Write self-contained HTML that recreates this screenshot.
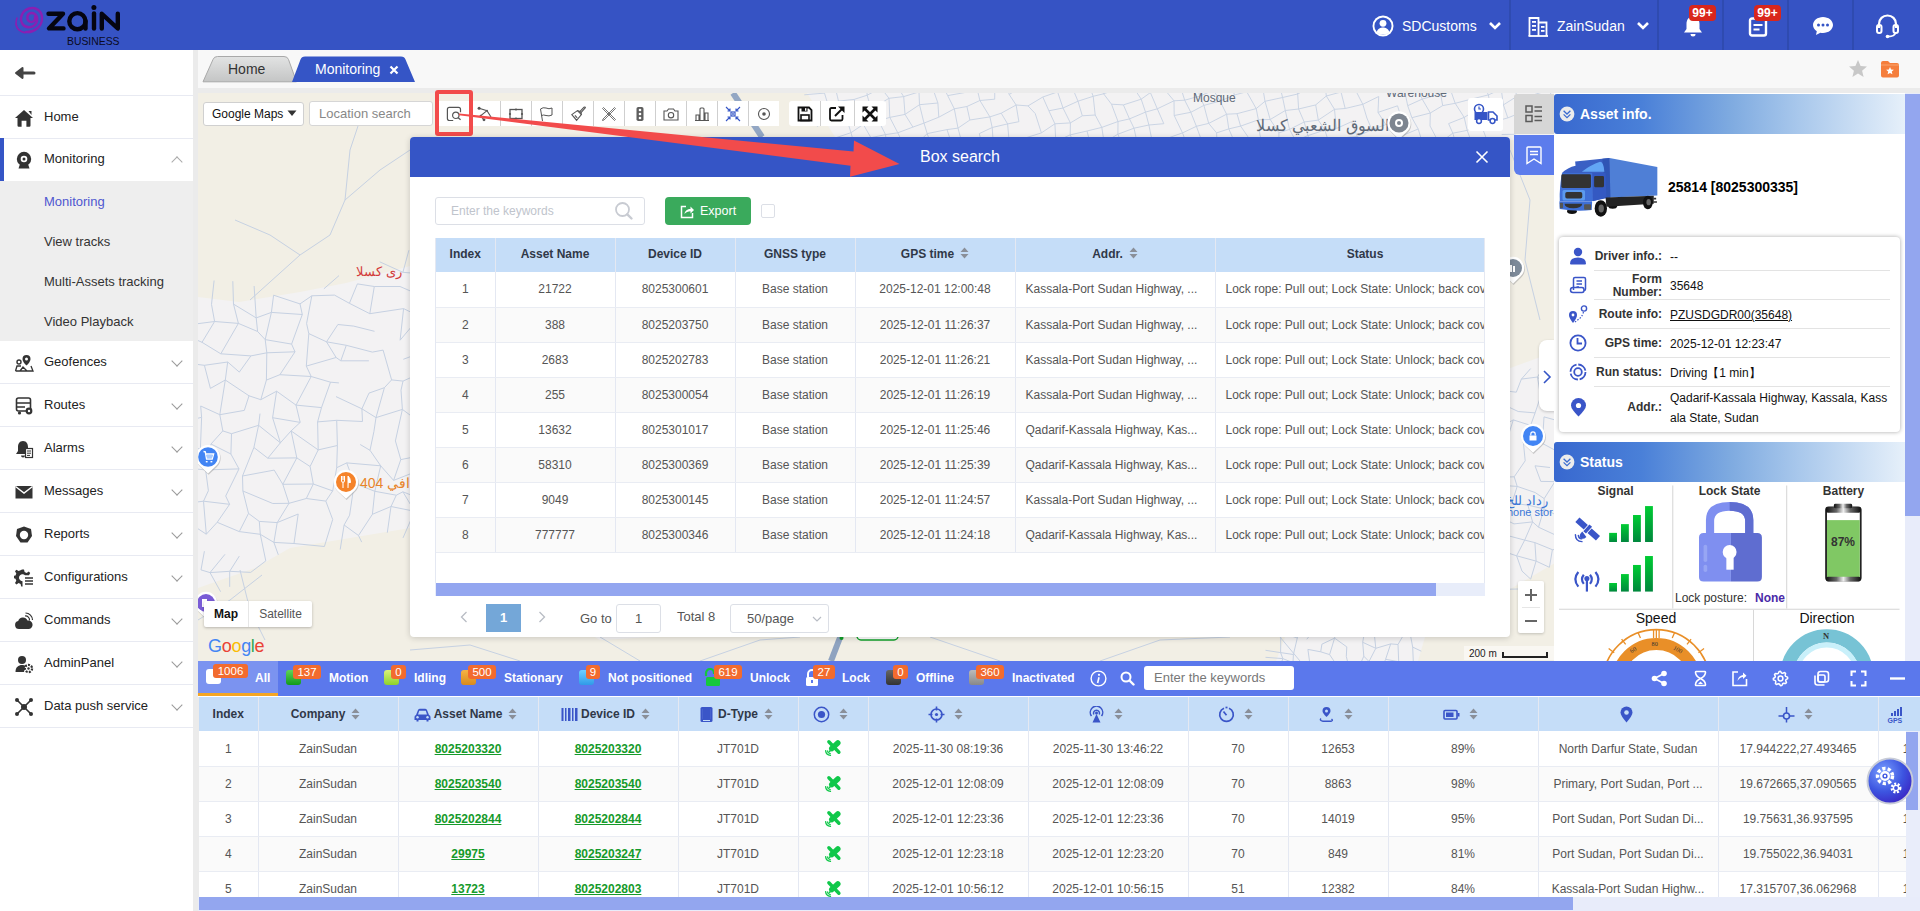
<!DOCTYPE html>
<html><head><meta charset="utf-8">
<style>
*{box-sizing:border-box}
html,body{margin:0;padding:0}
body{width:1920px;height:911px;overflow:hidden;position:relative;font-family:"Liberation Sans",sans-serif;background:#ebebeb;color:#333}
.abs{position:absolute}
#hdr{left:0;top:0;width:1920px;height:50px;background:#3653c4}
#side{left:0;top:50px;width:193px;height:861px;background:#fff}
.mi{position:absolute;left:0;width:193px;height:43px;border-bottom:1px solid #e8eaf2;font-size:13px;color:#222}
.mi .t{position:absolute;left:44px;top:13px}
.mi svg.ic{position:absolute;left:14px;top:12px}
.mi .chev{position:absolute;left:173px;top:16px;width:8px;height:8px;border-right:1px solid #999;border-bottom:1px solid #999;transform:rotate(45deg)}
.sub{position:absolute;left:44px;font-size:13px;color:#333}
#tabbar{left:198px;top:50px;width:1722px;height:38px;background:#f8f8f8}
#map{left:198px;top:93px;width:1722px;height:568px;background:#f2efe6;overflow:hidden}
</style></head><body>
<div id="hdr" class="abs">
<svg class="abs" style="left:0;top:0" width="130" height="50" viewBox="0 0 130 50">
 <g fill="none" stroke="#8a1fb2" stroke-linecap="round">
  <path d="M35 17 C36 21 32 23 29.5 21.5 C26 19.5 27 13.5 31 13 C36 12.5 38.5 18 36.5 22.5 C34 28 26 29 22.5 24 C19.5 19.5 21 11 29 8.5 C36 6.5 42.5 11 42 19 C41.5 27 34 32.5 26 32" stroke-width="2.4"/>
  <path d="M17 18 C14.5 25 17 30.5 24 32.5" stroke-width="1.6"/>
  <path d="M16 24 C16.5 29 20 31.5 25 32.8" stroke-width="1.4"/>
 </g>
 <g fill="none" stroke="#050510" stroke-width="4.4" stroke-linecap="round" stroke-linejoin="round">
  <path d="M48.5 13.8 H63 L49 28.4 H63.5"/>
  <circle cx="77.4" cy="21.2" r="8.1"/><path d="M85.5 21 V28.5"/>
  <path d="M94 13.5 V28.5"/>
  <path d="M101.8 28.5 V13.8 L117.8 28.5 V13.8"/>
 </g>
 <circle cx="93.9" cy="7.6" r="2.5" fill="#050510"/>
 <text x="67" y="44.6" font-family="Liberation Sans" font-size="11.2" fill="#0a0a22" textLength="52.5" lengthAdjust="spacingAndGlyphs">BUSINESS</text>
</svg>
<!-- user -->
<svg class="abs" style="left:1371px;top:14px" width="24" height="24" viewBox="0 0 24 24"><circle cx="12" cy="12" r="10.5" fill="#fff"/><circle cx="12" cy="12" r="8.6" fill="#3555c6"/><circle cx="12" cy="9.3" r="3.4" fill="#fff"/><path d="M5.6 18.2 C7 14.6 9.4 13.6 12 13.6 C14.6 13.6 17 14.6 18.4 18.2 C16.8 19.8 14.6 20.6 12 20.6 C9.4 20.6 7.2 19.8 5.6 18.2Z" fill="#fff"/></svg>
<div class="abs" style="left:1402px;top:18px;font-size:14px;color:#fff">SDCustoms</div>
<svg class="abs" style="left:1488px;top:20px" width="14" height="12" viewBox="0 0 14 12"><path d="M2 3 L7 8 L12 3" fill="none" stroke="#fff" stroke-width="2.6"/></svg>
<div class="abs" style="left:1509px;top:0;width:2px;height:50px;background:#2f4bb0"></div>
<svg class="abs" style="left:1528px;top:16px" width="21" height="21" viewBox="0 0 21 21"><g fill="none" stroke="#fff" stroke-width="1.8"><path d="M1.5 20 V2 H10.5 V20"/><path d="M10.5 6.5 H18.5 V20"/><path d="M0.5 20 H20"/></g><g fill="#fff"><rect x="4" y="5" width="4" height="1.8"/><rect x="4" y="9" width="4" height="1.8"/><rect x="4" y="13" width="4" height="1.8"/><rect x="13" y="10" width="3.5" height="1.8"/><rect x="13" y="14" width="3.5" height="1.8"/></g></svg>
<div class="abs" style="left:1557px;top:18px;font-size:14px;color:#fff">ZainSudan</div>
<svg class="abs" style="left:1636px;top:20px" width="14" height="12" viewBox="0 0 14 12"><path d="M2 3 L7 8 L12 3" fill="none" stroke="#fff" stroke-width="2.6"/></svg>
<div class="abs" style="left:1657px;top:0;width:2px;height:50px;background:#2f4bb0"></div>
<svg class="abs" style="left:1681px;top:14px" width="24" height="24" viewBox="0 0 24 24"><path d="M12 2.5 C7.5 2.5 5.5 6 5.5 10 V15 L3 18.5 H21 L18.5 15 V10 C18.5 6 16.5 2.5 12 2.5Z" fill="#fff"/><path d="M9.5 20 A2.5 2.5 0 0 0 14.5 20Z" fill="#fff"/></svg>
<div class="abs" style="left:1689px;top:5px;width:27px;height:16px;background:#d9261c;border-radius:4px;color:#fff;font-size:12px;font-weight:bold;text-align:center;line-height:16px">99+</div>
<div class="abs" style="left:1722px;top:0;width:2px;height:50px;background:#2f4bb0"></div>
<svg class="abs" style="left:1746px;top:14px" width="24" height="24" viewBox="0 0 24 24"><rect x="4" y="4.5" width="16" height="17" rx="2" fill="none" stroke="#fff" stroke-width="2.4"/><rect x="8" y="2" width="8" height="4" rx="1" fill="#fff"/><rect x="7.5" y="10" width="9" height="2" fill="#fff"/><rect x="7.5" y="14.5" width="6" height="2" fill="#fff"/></svg>
<div class="abs" style="left:1754px;top:5px;width:27px;height:16px;background:#d9261c;border-radius:4px;color:#fff;font-size:12px;font-weight:bold;text-align:center;line-height:16px">99+</div>
<div class="abs" style="left:1787px;top:0;width:2px;height:50px;background:#2f4bb0"></div>
<svg class="abs" style="left:1811px;top:14px" width="24" height="24" viewBox="0 0 24 24"><path d="M12 3 C6.5 3 2 6.6 2 11 C2 13.6 3.5 15.8 5.8 17.3 L5 21 L9.4 18.7 C10.2 18.9 11.1 19 12 19 C17.5 19 22 15.4 22 11 C22 6.6 17.5 3 12 3Z" fill="#fff"/><circle cx="7.5" cy="11" r="1.5" fill="#3555c6"/><circle cx="12" cy="11" r="1.5" fill="#3555c6"/><circle cx="16.5" cy="11" r="1.5" fill="#3555c6"/></svg>
<div class="abs" style="left:1852px;top:0;width:2px;height:50px;background:#2f4bb0"></div>
<svg class="abs" style="left:1875px;top:13px" width="25" height="26" viewBox="0 0 25 26"><path d="M4 15 V11 C4 6 7.8 2.5 12.5 2.5 C17.2 2.5 21 6 21 11 V15" fill="none" stroke="#fff" stroke-width="2.2"/><rect x="2" y="12" width="4.5" height="8" rx="2" fill="none" stroke="#fff" stroke-width="2"/><rect x="18.5" y="12" width="4.5" height="8" rx="2" fill="none" stroke="#fff" stroke-width="2"/><path d="M20.5 20 C19.5 23 16.5 23.5 13.5 23.5" fill="none" stroke="#fff" stroke-width="1.8"/><circle cx="12.5" cy="23.5" r="1.8" fill="#fff"/></svg>
</div>
<div id="side" class="abs"><svg class="abs" style="left:14px;top:16px" width="22" height="14" viewBox="0 0 22 14"><path d="M8.5 2 L2 7 L8.5 12 Z" fill="#444" stroke="#444" stroke-width="2" stroke-linejoin="round"/><path d="M4 7 H20" stroke="#444" stroke-width="3" stroke-linecap="round"/></svg><div class="abs" style="left:0;top:45px;width:193px;height:1px;background:#e8eaf2"></div><div class="mi" style="top:46px"><svg class="ic" width="20" height="20" viewBox="0 0 20 20"><path d="M10 2 L1 10 H3.5 V17.5 A1.2 1.2 0 0 0 4.7 18.7 H7.6 V12.8 H12.4 V18.7 H15.3 A1.2 1.2 0 0 0 16.5 17.5 V10 H19 Z" fill="#333"/><path d="M14.5 3 H17.5 V7 Z" fill="#333"/></svg><span class="t">Home</span></div><div class="mi" style="top:88px;height:43px;border-bottom:none"><svg class="ic" width="20" height="20" viewBox="0 0 20 20"><path d="M6 14 L4.5 18.5 H15.5 L14 14Z" fill="#333"/><circle cx="10" cy="9" r="7.2" fill="#333"/><circle cx="10" cy="9" r="3.3" fill="#fff"/><circle cx="10" cy="9" r="1.5" fill="#333"/></svg><span class="t">Monitoring</span><div class="chev" style="transform:rotate(-135deg);top:20px;border-color:#aaa"></div><div class="abs" style="left:0;top:0;width:4px;height:43px;background:#3555c6"></div></div><div class="abs" style="left:0;top:131px;width:193px;height:160px;background:#eeeeee"></div><div class="sub" style="top:144px;color:#4f57d0">Monitoring</div><div class="sub" style="top:184px">View tracks</div><div class="sub" style="top:224px">Multi-Assets tracking</div><div class="sub" style="top:264px">Video Playback</div><div class="mi" style="top:291px"><svg class="ic" width="20" height="20" viewBox="0 0 20 20"><path d="M12.5 2 A4 4 0 0 0 8.5 6 C8.5 9 12.5 12.5 12.5 12.5 C12.5 12.5 16.5 9 16.5 6 A4 4 0 0 0 12.5 2Z M12.5 4.5 A1.5 1.5 0 1 1 12.5 7.5 A1.5 1.5 0 1 1 12.5 4.5Z" fill="#333"/><circle cx="5" cy="9" r="2" fill="none" stroke="#333" stroke-width="1.4"/><path d="M1.5 18 L3 13 H7 M17 13 L19 18 H1.5 M6 18 L9 14 L13 18" fill="none" stroke="#333" stroke-width="1.3"/></svg><span class="t">Geofences</span><div class="chev"></div></div><div class="mi" style="top:334px"><svg class="ic" width="20" height="20" viewBox="0 0 20 20"><rect x="2.5" y="2" width="14" height="13" rx="2" fill="none" stroke="#333" stroke-width="1.6"/><path d="M2.5 7 H16.5 M2.5 11 H11" stroke="#333" stroke-width="1.4"/><circle cx="5.5" cy="17" r="1.6" fill="#333"/><circle cx="15" cy="15" r="3.4" fill="#333"/><circle cx="15" cy="15" r="1.2" fill="#fff"/></svg><span class="t">Routes</span><div class="chev"></div></div><div class="mi" style="top:377px"><svg class="ic" width="20" height="20" viewBox="0 0 20 20"><path d="M9 2 C5.5 2 4 5 4 8 V12 L2 15 H11 V9 H14 V8 C14 5 12.5 2 9 2Z" fill="#333"/><rect x="11.5" y="9.5" width="7" height="9" fill="#fff" stroke="#333" stroke-width="1.2"/><path d="M13 12 H17 M13 14.2 H17 M13 16.4 H16" stroke="#333" stroke-width="1"/><path d="M7 16.5 A2 2 0 0 0 11 16.5Z" fill="#333"/></svg><span class="t">Alarms</span><div class="chev"></div></div><div class="mi" style="top:420px"><svg class="ic" width="20" height="20" viewBox="0 0 20 20"><path d="M1.5 4 H18.5 V16.5 H1.5Z" fill="#333"/><path d="M1.5 4.5 L10 11 L18.5 4.5" fill="none" stroke="#fff" stroke-width="1.4"/></svg><span class="t">Messages</span><div class="chev"></div></div><div class="mi" style="top:463px"><svg class="ic" width="20" height="20" viewBox="0 0 20 20"><path d="M10 1.5 L17 4 L18 11 L13.5 17.5 H6.5 L2 11 L3 4Z" fill="#333"/><circle cx="10" cy="10" r="4.2" fill="#fff"/></svg><span class="t">Reports</span><div class="chev"></div></div><div class="mi" style="top:506px"><svg class="ic" width="20" height="20" viewBox="0 0 20 20"><path d="M8 1.5 L10 1.5 L10.6 4 L12.6 4.9 L14.8 3.6 L16.2 5 L15 7.2 H11 A3.5 3.5 0 1 0 8.5 13.2 V16 L8.6 18.5 H7.2 L6.6 16 L4.6 15.1 L2.4 16.4 L1 15 L2.3 12.8 L1.5 10.8 L-0.5 10 V8 L1.5 7.4 L2.3 5.4 L1 3.2 L2.4 1.8 L4.6 3.1 L6.6 2.2Z" fill="#333"/><path d="M11 10 H19 M11 13 H19 M11 16 H19" stroke="#333" stroke-width="1.6"/></svg><span class="t">Configurations</span><div class="chev"></div></div><div class="mi" style="top:549px"><svg class="ic" width="20" height="20" viewBox="0 0 20 20"><path d="M5 18 A4 4 0 0 1 4.2 10.1 A5 5 0 0 1 13.5 9.5 A3.3 3.3 0 0 1 15 18Z" fill="#333"/><path d="M11 5 A4 4 0 0 1 15.5 9.5 M11.5 2 A7 7 0 0 1 18.5 9" fill="none" stroke="#333" stroke-width="1.2"/></svg><span class="t">Commands</span><div class="chev"></div></div><div class="mi" style="top:592px"><svg class="ic" width="20" height="20" viewBox="0 0 20 20"><circle cx="8" cy="6" r="4" fill="#333"/><path d="M1.5 18 C1.5 13 4.5 11 8 11 C9.5 11 10.5 11.3 11.2 11.8 L10 18Z" fill="#333"/><circle cx="14.5" cy="14.5" r="3.6" fill="none" stroke="#333" stroke-width="2.2" stroke-dasharray="2 1.2"/><circle cx="14.5" cy="14.5" r="1.2" fill="#333"/></svg><span class="t">AdminPanel</span><div class="chev"></div></div><div class="mi" style="top:635px"><svg class="ic" width="20" height="20" viewBox="0 0 20 20"><path d="M3 3 L17 17 M17 3 L3 17" stroke="#333" stroke-width="1.6"/><circle cx="10" cy="10" r="3" fill="#333"/><circle cx="3" cy="3" r="2" fill="#333"/><circle cx="17" cy="3" r="2" fill="#333"/><circle cx="3" cy="17" r="2" fill="#333"/><circle cx="17" cy="17" r="2" fill="#333"/></svg><span class="t">Data push service</span><div class="chev"></div></div></div>
<div id="tabbar" class="abs">
<svg class="abs" style="left:0;top:0" width="230" height="38" viewBox="0 0 230 38">
 <defs><linearGradient id="tg" x1="0" y1="0" x2="0" y2="1"><stop offset="0" stop-color="#e2e3e3"/><stop offset="1" stop-color="#c4c5c5"/></linearGradient></defs>
 <path d="M5 31.8 L15 9.5 Q16 6.5 19.5 6.5 H86 Q89.5 6.5 90.5 9.5 L98.5 31.8 Z" fill="url(#tg)" stroke="#a9a9a9" stroke-width="1"/>
 <path d="M94 32 L102.5 9.5 Q103.5 6.5 107 6.5 H203 Q206.5 6.5 207.5 9.5 L217 32 Z" fill="#3555c6"/>
</svg>
<div class="abs" style="left:30px;top:11px;font-size:14px;color:#333">Home</div>
<div class="abs" style="left:117px;top:11px;font-size:14px;color:#fff">Monitoring</div>
<svg class="abs" style="left:191px;top:15px" width="10" height="10" viewBox="0 0 10 10"><path d="M1.5 1.5 L8.5 8.5 M8.5 1.5 L1.5 8.5" stroke="#fff" stroke-width="2.2"/></svg>
<svg class="abs" style="left:1650px;top:9px" width="20" height="20" viewBox="0 0 20 20"><path d="M10 1 L12.6 7 L19 7.5 L14.1 11.7 L15.6 18 L10 14.6 L4.4 18 L5.9 11.7 L1 7.5 L7.4 7 Z" fill="#c8c8c8"/></svg>
<svg class="abs" style="left:1682px;top:9px" width="20" height="20" viewBox="0 0 20 20"><path d="M1 4 Q1 2 3 2 H8 L10 4 H17 Q19 4 19 6 V16.5 Q19 18.5 17 18.5 H3 Q1 18.5 1 16.5Z" fill="#f57e3c"/><path d="M1 6 H19" stroke="#f9a46f" stroke-width="1"/><path d="M10 8 L11.1 10.6 L13.9 10.8 L11.8 12.6 L12.4 15.3 L10 13.9 L7.6 15.3 L8.2 12.6 L6.1 10.8 L8.9 10.6Z" fill="#fff"/></svg>
</div>
<div id="map" class="abs"><svg class="abs" style="left:0;top:0" width="1722" height="568" viewBox="198 93 1722 568">
<rect x="198" y="93" width="1722" height="568" fill="#f2efe5"/>
<polygon points="198,297 239,302 300,292 346,283 410,266 560,250 1300,200 1300,600 600,640 410,528 290,548 255,568 198,588" fill="#f3f2f3"/>
<polygon points="807,93 1560,93 1560,140 837,140" fill="#f3f2f3"/>
<polygon points="1505,370 1560,350 1560,560 1505,592" fill="#f3f2f3"/>
<polygon points="1276,661 1285,637 1425,637 1418,661" fill="#f3f2f3"/>
<polyline points="196.9,323.8 214.6,321.5" fill="none" stroke="#c6d1e2" stroke-width="1.0"/>
<polyline points="196.3,339.8 202,342.3" fill="none" stroke="#c6d1e2" stroke-width="1.0"/>
<polyline points="189.8,363.5 204.4,365.3" fill="none" stroke="#c6d1e2" stroke-width="1.0"/>
<polyline points="177.1,423.4 201.6,417.3" fill="none" stroke="#c6d1e2" stroke-width="1.0"/>
<polyline points="167.5,442.8 200.4,449.1" fill="none" stroke="#c6d1e2" stroke-width="1.0"/>
<polyline points="214.1,280.5 211.5,304.4" fill="none" stroke="#c6d1e2" stroke-width="1.0"/>
<polyline points="211.5,304.4 214.6,321.5" fill="none" stroke="#c6d1e2" stroke-width="1.0"/>
<polyline points="214.6,321.5 238.4,323.4" fill="none" stroke="#c6d1e2" stroke-width="1.0"/>
<polyline points="214.6,321.5 202,342.3" fill="none" stroke="#c6d1e2" stroke-width="1.0"/>
<polyline points="202,342.3 220.8,353.8" fill="none" stroke="#c6d1e2" stroke-width="1.0"/>
<polyline points="204.4,365.3 227.7,362" fill="none" stroke="#c6d1e2" stroke-width="1.0"/>
<polyline points="204.4,365.3 210.4,388.4" fill="none" stroke="#c6d1e2" stroke-width="1.0"/>
<polyline points="210.4,388.4 225.3,380" fill="none" stroke="#c6d1e2" stroke-width="1.0"/>
<polyline points="200.7,406 219.8,414.7" fill="none" stroke="#c6d1e2" stroke-width="1.0"/>
<polyline points="200.7,406 201.6,417.3" fill="none" stroke="#c6d1e2" stroke-width="1.0"/>
<polyline points="201.6,417.3 200.4,449.1" fill="none" stroke="#c6d1e2" stroke-width="1.0"/>
<polyline points="200.4,449.1 196.9,469.1" fill="none" stroke="#c6d1e2" stroke-width="1.0"/>
<polyline points="196.9,469.1 205.6,469.9" fill="none" stroke="#c6d1e2" stroke-width="1.0"/>
<polyline points="179.2,504.2 203.5,501.2" fill="none" stroke="#c6d1e2" stroke-width="1.0"/>
<polyline points="176.9,514.9 206.3,534.2" fill="none" stroke="#c6d1e2" stroke-width="1.0"/>
<polyline points="232.8,281.2 233.5,304.1" fill="none" stroke="#c6d1e2" stroke-width="1.0"/>
<polyline points="233.5,304.1 256.2,317.9" fill="none" stroke="#c6d1e2" stroke-width="1.0"/>
<polyline points="233.5,304.1 238.4,323.4" fill="none" stroke="#c6d1e2" stroke-width="1.0"/>
<polyline points="238.4,323.4 257.6,331.5" fill="none" stroke="#c6d1e2" stroke-width="1.0"/>
<polyline points="238.4,323.4 220.8,353.8" fill="none" stroke="#c6d1e2" stroke-width="1.0"/>
<polyline points="220.8,353.8 250.9,355.9" fill="none" stroke="#c6d1e2" stroke-width="1.0"/>
<polyline points="227.7,362 239.3,372.1" fill="none" stroke="#c6d1e2" stroke-width="1.0"/>
<polyline points="227.7,362 225.3,380" fill="none" stroke="#c6d1e2" stroke-width="1.0"/>
<polyline points="225.3,380 249,395.8" fill="none" stroke="#c6d1e2" stroke-width="1.0"/>
<polyline points="225.3,380 219.8,414.7" fill="none" stroke="#c6d1e2" stroke-width="1.0"/>
<polyline points="219.8,414.7 244.3,410.4" fill="none" stroke="#c6d1e2" stroke-width="1.0"/>
<polyline points="219.8,414.7 222.8,430.9" fill="none" stroke="#c6d1e2" stroke-width="1.0"/>
<polyline points="222.8,430.9 231.5,433.7" fill="none" stroke="#c6d1e2" stroke-width="1.0"/>
<polyline points="222.8,430.9 211,444" fill="none" stroke="#c6d1e2" stroke-width="1.0"/>
<polyline points="211,444 230.9,454" fill="none" stroke="#c6d1e2" stroke-width="1.0"/>
<polyline points="211,444 205.6,469.9" fill="none" stroke="#c6d1e2" stroke-width="1.0"/>
<polyline points="205.6,469.9 239,468.9" fill="none" stroke="#c6d1e2" stroke-width="1.0"/>
<polyline points="205.6,469.9 208.4,490.7" fill="none" stroke="#c6d1e2" stroke-width="1.0"/>
<polyline points="208.4,490.7 203.5,501.2" fill="none" stroke="#c6d1e2" stroke-width="1.0"/>
<polyline points="203.5,501.2 229.6,504.3" fill="none" stroke="#c6d1e2" stroke-width="1.0"/>
<polyline points="203.5,501.2 206.3,534.2" fill="none" stroke="#c6d1e2" stroke-width="1.0"/>
<polyline points="206.3,534.2 217.2,522.3" fill="none" stroke="#c6d1e2" stroke-width="1.0"/>
<polyline points="204.4,551.2 201,569.9" fill="none" stroke="#c6d1e2" stroke-width="1.0"/>
<polyline points="201,569.9 210,572.6" fill="none" stroke="#c6d1e2" stroke-width="1.0"/>
<polyline points="254.1,286 256.2,317.9" fill="none" stroke="#c6d1e2" stroke-width="1.0"/>
<polyline points="256.2,317.9 271.4,312.4" fill="none" stroke="#c6d1e2" stroke-width="1.0"/>
<polyline points="256.2,317.9 257.6,331.5" fill="none" stroke="#c6d1e2" stroke-width="1.0"/>
<polyline points="257.6,331.5 265.2,339.6" fill="none" stroke="#c6d1e2" stroke-width="1.0"/>
<polyline points="250.9,355.9 266.8,352.8" fill="none" stroke="#c6d1e2" stroke-width="1.0"/>
<polyline points="250.9,355.9 239.3,372.1" fill="none" stroke="#c6d1e2" stroke-width="1.0"/>
<polyline points="249,395.8 260.8,399.7" fill="none" stroke="#c6d1e2" stroke-width="1.0"/>
<polyline points="249,395.8 244.3,410.4" fill="none" stroke="#c6d1e2" stroke-width="1.0"/>
<polyline points="231.5,433.7 258.6,425.3" fill="none" stroke="#c6d1e2" stroke-width="1.0"/>
<polyline points="231.5,433.7 230.9,454" fill="none" stroke="#c6d1e2" stroke-width="1.0"/>
<polyline points="230.9,454 239,468.9" fill="none" stroke="#c6d1e2" stroke-width="1.0"/>
<polyline points="239,468.9 225.7,496" fill="none" stroke="#c6d1e2" stroke-width="1.0"/>
<polyline points="225.7,496 229.6,504.3" fill="none" stroke="#c6d1e2" stroke-width="1.0"/>
<polyline points="229.6,504.3 217.2,522.3" fill="none" stroke="#c6d1e2" stroke-width="1.0"/>
<polyline points="217.2,522.3 239.3,531.6" fill="none" stroke="#c6d1e2" stroke-width="1.0"/>
<polyline points="225,554.3 210,572.6" fill="none" stroke="#c6d1e2" stroke-width="1.0"/>
<polyline points="210,572.6 229.7,571.3" fill="none" stroke="#c6d1e2" stroke-width="1.0"/>
<polyline points="210,572.6 220.6,591.7" fill="none" stroke="#c6d1e2" stroke-width="1.0"/>
<polyline points="273.6,295.2 300,303.9" fill="none" stroke="#c6d1e2" stroke-width="1.0"/>
<polyline points="273.6,295.2 271.4,312.4" fill="none" stroke="#c6d1e2" stroke-width="1.0"/>
<polyline points="271.4,312.4 302.3,314.5" fill="none" stroke="#c6d1e2" stroke-width="1.0"/>
<polyline points="271.4,312.4 265.2,339.6" fill="none" stroke="#c6d1e2" stroke-width="1.0"/>
<polyline points="265.2,339.6 291.6,344.1" fill="none" stroke="#c6d1e2" stroke-width="1.0"/>
<polyline points="265.2,339.6 266.8,352.8" fill="none" stroke="#c6d1e2" stroke-width="1.0"/>
<polyline points="266.8,352.8 295,351.8" fill="none" stroke="#c6d1e2" stroke-width="1.0"/>
<polyline points="266.8,352.8 266.4,380.1" fill="none" stroke="#c6d1e2" stroke-width="1.0"/>
<polyline points="266.4,380.1 279.9,374.7" fill="none" stroke="#c6d1e2" stroke-width="1.0"/>
<polyline points="266.4,380.1 260.8,399.7" fill="none" stroke="#c6d1e2" stroke-width="1.0"/>
<polyline points="260.8,399.7 276.6,391.2" fill="none" stroke="#c6d1e2" stroke-width="1.0"/>
<polyline points="260,413.6 258.6,425.3" fill="none" stroke="#c6d1e2" stroke-width="1.0"/>
<polyline points="258.6,425.3 280.4,442.8" fill="none" stroke="#c6d1e2" stroke-width="1.0"/>
<polyline points="258.6,425.3 253.9,447.5" fill="none" stroke="#c6d1e2" stroke-width="1.0"/>
<polyline points="253.9,447.5 267.8,458.2" fill="none" stroke="#c6d1e2" stroke-width="1.0"/>
<polyline points="253.9,447.5 242.5,476" fill="none" stroke="#c6d1e2" stroke-width="1.0"/>
<polyline points="242.5,476 274.2,470.1" fill="none" stroke="#c6d1e2" stroke-width="1.0"/>
<polyline points="242.5,476 242.9,491" fill="none" stroke="#c6d1e2" stroke-width="1.0"/>
<polyline points="242.9,491 272.8,503.5" fill="none" stroke="#c6d1e2" stroke-width="1.0"/>
<polyline points="242.9,491 248.5,513.4" fill="none" stroke="#c6d1e2" stroke-width="1.0"/>
<polyline points="248.5,513.4 259.3,521.4" fill="none" stroke="#c6d1e2" stroke-width="1.0"/>
<polyline points="248.5,513.4 239.3,531.6" fill="none" stroke="#c6d1e2" stroke-width="1.0"/>
<polyline points="239.3,531.6 260.3,534.3" fill="none" stroke="#c6d1e2" stroke-width="1.0"/>
<polyline points="239.3,556.1 229.7,571.3" fill="none" stroke="#c6d1e2" stroke-width="1.0"/>
<polyline points="229.7,571.3 250.7,572.4" fill="none" stroke="#c6d1e2" stroke-width="1.0"/>
<polyline points="229.7,571.3 229.7,586.9" fill="none" stroke="#c6d1e2" stroke-width="1.0"/>
<polyline points="300,303.9 311.8,295.8" fill="none" stroke="#c6d1e2" stroke-width="1.0"/>
<polyline points="300,303.9 302.3,314.5" fill="none" stroke="#c6d1e2" stroke-width="1.0"/>
<polyline points="302.3,314.5 291.6,344.1" fill="none" stroke="#c6d1e2" stroke-width="1.0"/>
<polyline points="291.6,344.1 295,351.8" fill="none" stroke="#c6d1e2" stroke-width="1.0"/>
<polyline points="295,351.8 279.9,374.7" fill="none" stroke="#c6d1e2" stroke-width="1.0"/>
<polyline points="279.9,374.7 311.2,376.5" fill="none" stroke="#c6d1e2" stroke-width="1.0"/>
<polyline points="276.6,391.2 296,405.1" fill="none" stroke="#c6d1e2" stroke-width="1.0"/>
<polyline points="276.6,391.2 272.6,417.7" fill="none" stroke="#c6d1e2" stroke-width="1.0"/>
<polyline points="272.6,417.7 300.2,422.4" fill="none" stroke="#c6d1e2" stroke-width="1.0"/>
<polyline points="272.6,417.7 280.4,442.8" fill="none" stroke="#c6d1e2" stroke-width="1.0"/>
<polyline points="280.4,442.8 291.1,430.9" fill="none" stroke="#c6d1e2" stroke-width="1.0"/>
<polyline points="280.4,442.8 267.8,458.2" fill="none" stroke="#c6d1e2" stroke-width="1.0"/>
<polyline points="267.8,458.2 296.8,457.9" fill="none" stroke="#c6d1e2" stroke-width="1.0"/>
<polyline points="274.2,470.1 282.8,484.3" fill="none" stroke="#c6d1e2" stroke-width="1.0"/>
<polyline points="272.8,503.5 289,503.3" fill="none" stroke="#c6d1e2" stroke-width="1.0"/>
<polyline points="259.3,521.4 277.2,522.6" fill="none" stroke="#c6d1e2" stroke-width="1.0"/>
<polyline points="259.3,521.4 260.3,534.3" fill="none" stroke="#c6d1e2" stroke-width="1.0"/>
<polyline points="260.3,534.3 273.9,542.4" fill="none" stroke="#c6d1e2" stroke-width="1.0"/>
<polyline points="260.3,534.3 265.8,560.9" fill="none" stroke="#c6d1e2" stroke-width="1.0"/>
<polyline points="265.8,560.9 250.7,572.4" fill="none" stroke="#c6d1e2" stroke-width="1.0"/>
<polyline points="323.9,288.8 339,275.6" fill="none" stroke="#c6d1e2" stroke-width="1.0"/>
<polyline points="311.8,295.8 334.5,295.1" fill="none" stroke="#c6d1e2" stroke-width="1.0"/>
<polyline points="311.8,295.8 306.6,323.5" fill="none" stroke="#c6d1e2" stroke-width="1.0"/>
<polyline points="306.6,323.5 308.8,333.6" fill="none" stroke="#c6d1e2" stroke-width="1.0"/>
<polyline points="308.8,333.6 326.5,341.8" fill="none" stroke="#c6d1e2" stroke-width="1.0"/>
<polyline points="308.8,333.6 306.3,366.1" fill="none" stroke="#c6d1e2" stroke-width="1.0"/>
<polyline points="306.3,366.1 336.1,357.5" fill="none" stroke="#c6d1e2" stroke-width="1.0"/>
<polyline points="306.3,366.1 311.2,376.5" fill="none" stroke="#c6d1e2" stroke-width="1.0"/>
<polyline points="311.2,376.5 330.5,382.2" fill="none" stroke="#c6d1e2" stroke-width="1.0"/>
<polyline points="311.2,376.5 296,405.1" fill="none" stroke="#c6d1e2" stroke-width="1.0"/>
<polyline points="296,405.1 321.5,407.6" fill="none" stroke="#c6d1e2" stroke-width="1.0"/>
<polyline points="296,405.1 300.2,422.4" fill="none" stroke="#c6d1e2" stroke-width="1.0"/>
<polyline points="300.2,422.4 291.1,430.9" fill="none" stroke="#c6d1e2" stroke-width="1.0"/>
<polyline points="291.1,430.9 318.2,449.9" fill="none" stroke="#c6d1e2" stroke-width="1.0"/>
<polyline points="291.1,430.9 296.8,457.9" fill="none" stroke="#c6d1e2" stroke-width="1.0"/>
<polyline points="296.8,457.9 310.1,466.5" fill="none" stroke="#c6d1e2" stroke-width="1.0"/>
<polyline points="296.8,457.9 282.8,484.3" fill="none" stroke="#c6d1e2" stroke-width="1.0"/>
<polyline points="282.8,484.3 313.3,484" fill="none" stroke="#c6d1e2" stroke-width="1.0"/>
<polyline points="282.8,484.3 289,503.3" fill="none" stroke="#c6d1e2" stroke-width="1.0"/>
<polyline points="289,503.3 306.3,498.5" fill="none" stroke="#c6d1e2" stroke-width="1.0"/>
<polyline points="289,503.3 277.2,522.6" fill="none" stroke="#c6d1e2" stroke-width="1.0"/>
<polyline points="277.2,522.6 298.2,514" fill="none" stroke="#c6d1e2" stroke-width="1.0"/>
<polyline points="277.2,522.6 273.9,542.4" fill="none" stroke="#c6d1e2" stroke-width="1.0"/>
<polyline points="273.9,542.4 294,543.5" fill="none" stroke="#c6d1e2" stroke-width="1.0"/>
<polyline points="273.9,542.4 278.3,554.8" fill="none" stroke="#c6d1e2" stroke-width="1.0"/>
<polyline points="334.5,295.1 349.4,303.3" fill="none" stroke="#c6d1e2" stroke-width="1.0"/>
<polyline points="337.9,324.5 353.7,326.1" fill="none" stroke="#c6d1e2" stroke-width="1.0"/>
<polyline points="337.9,324.5 326.5,341.8" fill="none" stroke="#c6d1e2" stroke-width="1.0"/>
<polyline points="326.5,341.8 346.3,345.3" fill="none" stroke="#c6d1e2" stroke-width="1.0"/>
<polyline points="326.5,341.8 336.1,357.5" fill="none" stroke="#c6d1e2" stroke-width="1.0"/>
<polyline points="336.1,357.5 340.8,360.8" fill="none" stroke="#c6d1e2" stroke-width="1.0"/>
<polyline points="330.5,382.2 338.9,382.9" fill="none" stroke="#c6d1e2" stroke-width="1.0"/>
<polyline points="330.5,382.2 321.5,407.6" fill="none" stroke="#c6d1e2" stroke-width="1.0"/>
<polyline points="321.5,407.6 317.6,421.9" fill="none" stroke="#c6d1e2" stroke-width="1.0"/>
<polyline points="317.6,421.9 336.7,420.3" fill="none" stroke="#c6d1e2" stroke-width="1.0"/>
<polyline points="317.6,421.9 318.2,449.9" fill="none" stroke="#c6d1e2" stroke-width="1.0"/>
<polyline points="318.2,449.9 337.4,445.5" fill="none" stroke="#c6d1e2" stroke-width="1.0"/>
<polyline points="318.2,449.9 310.1,466.5" fill="none" stroke="#c6d1e2" stroke-width="1.0"/>
<polyline points="310.1,466.5 313.3,484" fill="none" stroke="#c6d1e2" stroke-width="1.0"/>
<polyline points="313.3,484 332.7,490.9" fill="none" stroke="#c6d1e2" stroke-width="1.0"/>
<polyline points="313.3,484 306.3,498.5" fill="none" stroke="#c6d1e2" stroke-width="1.0"/>
<polyline points="306.3,498.5 325.8,501.1" fill="none" stroke="#c6d1e2" stroke-width="1.0"/>
<polyline points="298.2,514 294,543.5" fill="none" stroke="#c6d1e2" stroke-width="1.0"/>
<polyline points="294,543.5 324.4,546.5" fill="none" stroke="#c6d1e2" stroke-width="1.0"/>
<polyline points="357.4,283.9 374.3,286.5" fill="none" stroke="#c6d1e2" stroke-width="1.0"/>
<polyline points="357.4,283.9 349.4,303.3" fill="none" stroke="#c6d1e2" stroke-width="1.0"/>
<polyline points="349.4,303.3 369.8,313.7" fill="none" stroke="#c6d1e2" stroke-width="1.0"/>
<polyline points="353.7,326.1 374.5,331.3" fill="none" stroke="#c6d1e2" stroke-width="1.0"/>
<polyline points="346.3,345.3 372.4,352.1" fill="none" stroke="#c6d1e2" stroke-width="1.0"/>
<polyline points="346.3,345.3 340.8,360.8" fill="none" stroke="#c6d1e2" stroke-width="1.0"/>
<polyline points="340.8,360.8 368.9,360.8" fill="none" stroke="#c6d1e2" stroke-width="1.0"/>
<polyline points="336,396.6 361.9,408.8" fill="none" stroke="#c6d1e2" stroke-width="1.0"/>
<polyline points="336.7,420.3 362.5,421.5" fill="none" stroke="#c6d1e2" stroke-width="1.0"/>
<polyline points="336.7,420.3 337.4,445.5" fill="none" stroke="#c6d1e2" stroke-width="1.0"/>
<polyline points="337.4,445.5 336.7,467.7" fill="none" stroke="#c6d1e2" stroke-width="1.0"/>
<polyline points="336.7,467.7 346.7,462.9" fill="none" stroke="#c6d1e2" stroke-width="1.0"/>
<polyline points="336.7,467.7 332.7,490.9" fill="none" stroke="#c6d1e2" stroke-width="1.0"/>
<polyline points="332.7,490.9 325.8,501.1" fill="none" stroke="#c6d1e2" stroke-width="1.0"/>
<polyline points="325.8,501.1 332.7,519.5" fill="none" stroke="#c6d1e2" stroke-width="1.0"/>
<polyline points="332.7,519.5 324.4,546.5" fill="none" stroke="#c6d1e2" stroke-width="1.0"/>
<polyline points="379.7,261.8 402.9,272.3" fill="none" stroke="#c6d1e2" stroke-width="1.0"/>
<polyline points="374.3,286.5 400,286.5" fill="none" stroke="#c6d1e2" stroke-width="1.0"/>
<polyline points="374.3,286.5 369.8,313.7" fill="none" stroke="#c6d1e2" stroke-width="1.0"/>
<polyline points="369.8,313.7 403.6,308.6" fill="none" stroke="#c6d1e2" stroke-width="1.0"/>
<polyline points="372.4,352.1 383.1,350.1" fill="none" stroke="#c6d1e2" stroke-width="1.0"/>
<polyline points="369,393.1 384.4,387.7" fill="none" stroke="#c6d1e2" stroke-width="1.0"/>
<polyline points="369,393.1 361.9,408.8" fill="none" stroke="#c6d1e2" stroke-width="1.0"/>
<polyline points="361.9,408.8 376,417.6" fill="none" stroke="#c6d1e2" stroke-width="1.0"/>
<polyline points="361.9,408.8 362.5,421.5" fill="none" stroke="#c6d1e2" stroke-width="1.0"/>
<polyline points="360.2,444.5 370,450.3" fill="none" stroke="#c6d1e2" stroke-width="1.0"/>
<polyline points="346.7,462.9 380.7,465.8" fill="none" stroke="#c6d1e2" stroke-width="1.0"/>
<polyline points="346.7,462.9 354.3,483.2" fill="none" stroke="#c6d1e2" stroke-width="1.0"/>
<polyline points="354.3,483.2 374.8,491.3" fill="none" stroke="#c6d1e2" stroke-width="1.0"/>
<polyline points="354.3,483.2 349.6,515.2" fill="none" stroke="#c6d1e2" stroke-width="1.0"/>
<polyline points="349.6,515.2 344.1,525" fill="none" stroke="#c6d1e2" stroke-width="1.0"/>
<polyline points="344.1,525 358.5,535.5" fill="none" stroke="#c6d1e2" stroke-width="1.0"/>
<polyline points="344.1,525 340.2,549.5" fill="none" stroke="#c6d1e2" stroke-width="1.0"/>
<polyline points="408.9,250.2 402.9,272.3" fill="none" stroke="#c6d1e2" stroke-width="1.0"/>
<polyline points="402.9,272.3 420.6,273.8" fill="none" stroke="#c6d1e2" stroke-width="1.0"/>
<polyline points="400,286.5 427,298.2" fill="none" stroke="#c6d1e2" stroke-width="1.0"/>
<polyline points="403.6,308.6 414.4,313.9" fill="none" stroke="#c6d1e2" stroke-width="1.0"/>
<polyline points="403.6,308.6 400.1,340.2" fill="none" stroke="#c6d1e2" stroke-width="1.0"/>
<polyline points="400.1,340.2 410.9,327.4" fill="none" stroke="#c6d1e2" stroke-width="1.0"/>
<polyline points="383.1,350.1 391.6,379.9" fill="none" stroke="#c6d1e2" stroke-width="1.0"/>
<polyline points="391.6,379.9 403,381.1" fill="none" stroke="#c6d1e2" stroke-width="1.0"/>
<polyline points="391.6,379.9 384.4,387.7" fill="none" stroke="#c6d1e2" stroke-width="1.0"/>
<polyline points="384.4,387.7 376,417.6" fill="none" stroke="#c6d1e2" stroke-width="1.0"/>
<polyline points="376,417.6 402.4,409.4" fill="none" stroke="#c6d1e2" stroke-width="1.0"/>
<polyline points="376,417.6 373.9,431.6" fill="none" stroke="#c6d1e2" stroke-width="1.0"/>
<polyline points="373.9,431.6 370,450.3" fill="none" stroke="#c6d1e2" stroke-width="1.0"/>
<polyline points="370,450.3 380.7,465.8" fill="none" stroke="#c6d1e2" stroke-width="1.0"/>
<polyline points="380.7,465.8 393.6,480.4" fill="none" stroke="#c6d1e2" stroke-width="1.0"/>
<polyline points="380.7,465.8 374.8,491.3" fill="none" stroke="#c6d1e2" stroke-width="1.0"/>
<polyline points="374.8,491.3 396.3,495.2" fill="none" stroke="#c6d1e2" stroke-width="1.0"/>
<polyline points="374.8,491.3 372.4,514.3" fill="none" stroke="#c6d1e2" stroke-width="1.0"/>
<polyline points="372.4,514.3 391,506.5" fill="none" stroke="#c6d1e2" stroke-width="1.0"/>
<polyline points="372.4,514.3 358.5,535.5" fill="none" stroke="#c6d1e2" stroke-width="1.0"/>
<polyline points="358.5,535.5 361.7,542.1" fill="none" stroke="#c6d1e2" stroke-width="1.0"/>
<polyline points="414.4,313.9 410.9,327.4" fill="none" stroke="#c6d1e2" stroke-width="1.0"/>
<polyline points="410.9,327.4 433.2,332.3" fill="none" stroke="#c6d1e2" stroke-width="1.0"/>
<polyline points="403.3,359.3 426.3,350.7" fill="none" stroke="#c6d1e2" stroke-width="1.0"/>
<polyline points="403,381.1 425.7,370.8" fill="none" stroke="#c6d1e2" stroke-width="1.0"/>
<polyline points="403,381.1 401,390.2" fill="none" stroke="#c6d1e2" stroke-width="1.0"/>
<polyline points="401,390.2 402.4,409.4" fill="none" stroke="#c6d1e2" stroke-width="1.0"/>
<polyline points="402.4,409.4 421.4,423.5" fill="none" stroke="#c6d1e2" stroke-width="1.0"/>
<polyline points="402.4,409.4 395.4,440.9" fill="none" stroke="#c6d1e2" stroke-width="1.0"/>
<polyline points="395.4,440.9 400.8,459.6" fill="none" stroke="#c6d1e2" stroke-width="1.0"/>
<polyline points="400.8,459.6 413.8,457" fill="none" stroke="#c6d1e2" stroke-width="1.0"/>
<polyline points="400.8,459.6 393.6,480.4" fill="none" stroke="#c6d1e2" stroke-width="1.0"/>
<polyline points="393.6,480.4 410.7,473.7" fill="none" stroke="#c6d1e2" stroke-width="1.0"/>
<polyline points="396.3,495.2 402.9,491.8" fill="none" stroke="#c6d1e2" stroke-width="1.0"/>
<polyline points="396.3,495.2 391,506.5" fill="none" stroke="#c6d1e2" stroke-width="1.0"/>
<polyline points="391,506.5 414.6,511.3" fill="none" stroke="#c6d1e2" stroke-width="1.0"/>
<polyline points="391,506.5 387.3,532.7" fill="none" stroke="#c6d1e2" stroke-width="1.0"/>
<polyline points="410.7,473.7 426.7,474.7" fill="none" stroke="#c6d1e2" stroke-width="1.0"/>
<polyline points="402.9,491.8 430.7,502.8" fill="none" stroke="#c6d1e2" stroke-width="1.0"/>
<polyline points="402.9,491.8 414.6,511.3" fill="none" stroke="#c6d1e2" stroke-width="1.0"/>
<polyline points="414.6,511.3 403,537.9" fill="none" stroke="#c6d1e2" stroke-width="1.0"/>
<polyline points="250,300 300,255 330,235 345,200 380,170 410,150" fill="none" stroke="#c6d1e2" stroke-width="1.0"/>
<polyline points="300,255 270,235 235,220" fill="none" stroke="#c6d1e2" stroke-width="1.0"/>
<polyline points="345,200 350,150 360,120" fill="none" stroke="#c6d1e2" stroke-width="1.0"/>
<polyline points="198,620 230,600 262,575" fill="none" stroke="#c6d1e2" stroke-width="1.0"/>
<polyline points="240,570 250,610 265,640" fill="none" stroke="#c6d1e2" stroke-width="1.0"/>
<polyline points="804.3,94.8 824.5,93.1" fill="none" stroke="#c6d1e2" stroke-width="0.9"/>
<polyline points="812.4,111.5 828.8,107.5" fill="none" stroke="#c6d1e2" stroke-width="0.9"/>
<polyline points="816.9,126.6 831.7,117.6" fill="none" stroke="#c6d1e2" stroke-width="0.9"/>
<polyline points="819.5,142.6 836.3,137.6" fill="none" stroke="#c6d1e2" stroke-width="0.9"/>
<polyline points="824.5,93.1 828.8,107.5" fill="none" stroke="#c6d1e2" stroke-width="0.9"/>
<polyline points="828.8,107.5 838.5,101.1" fill="none" stroke="#c6d1e2" stroke-width="0.9"/>
<polyline points="828.8,107.5 831.7,117.6" fill="none" stroke="#c6d1e2" stroke-width="0.9"/>
<polyline points="831.7,117.6 845,113.6" fill="none" stroke="#c6d1e2" stroke-width="0.9"/>
<polyline points="836.3,137.6 851,132.7" fill="none" stroke="#c6d1e2" stroke-width="0.9"/>
<polyline points="836.3,137.6 842,147" fill="none" stroke="#c6d1e2" stroke-width="0.9"/>
<polyline points="835.9,90.3 838.5,101.1" fill="none" stroke="#c6d1e2" stroke-width="0.9"/>
<polyline points="838.5,101.1 854.2,99.4" fill="none" stroke="#c6d1e2" stroke-width="0.9"/>
<polyline points="838.5,101.1 845,113.6" fill="none" stroke="#c6d1e2" stroke-width="0.9"/>
<polyline points="845,113.6 857.7,112.1" fill="none" stroke="#c6d1e2" stroke-width="0.9"/>
<polyline points="845,113.6 851,132.7" fill="none" stroke="#c6d1e2" stroke-width="0.9"/>
<polyline points="851,132.7 863.3,124.4" fill="none" stroke="#c6d1e2" stroke-width="0.9"/>
<polyline points="851,132.7 853.9,143.2" fill="none" stroke="#c6d1e2" stroke-width="0.9"/>
<polyline points="854.2,99.4 867.2,95.2" fill="none" stroke="#c6d1e2" stroke-width="0.9"/>
<polyline points="854.2,99.4 857.7,112.1" fill="none" stroke="#c6d1e2" stroke-width="0.9"/>
<polyline points="857.7,112.1 871,109.1" fill="none" stroke="#c6d1e2" stroke-width="0.9"/>
<polyline points="857.7,112.1 863.3,124.4" fill="none" stroke="#c6d1e2" stroke-width="0.9"/>
<polyline points="863.3,124.4 878.5,120.7" fill="none" stroke="#c6d1e2" stroke-width="0.9"/>
<polyline points="863.3,124.4 870.9,137.7" fill="none" stroke="#c6d1e2" stroke-width="0.9"/>
<polyline points="870.9,137.7 885.5,134.6" fill="none" stroke="#c6d1e2" stroke-width="0.9"/>
<polyline points="870.9,137.7 874.1,151.6" fill="none" stroke="#c6d1e2" stroke-width="0.9"/>
<polyline points="865.8,80.1 867.2,95.2" fill="none" stroke="#c6d1e2" stroke-width="0.9"/>
<polyline points="867.2,95.2 881,87.8" fill="none" stroke="#c6d1e2" stroke-width="0.9"/>
<polyline points="867.2,95.2 871,109.1" fill="none" stroke="#c6d1e2" stroke-width="0.9"/>
<polyline points="871,109.1 889,98.3" fill="none" stroke="#c6d1e2" stroke-width="0.9"/>
<polyline points="871,109.1 878.5,120.7" fill="none" stroke="#c6d1e2" stroke-width="0.9"/>
<polyline points="878.5,120.7 889.8,117.4" fill="none" stroke="#c6d1e2" stroke-width="0.9"/>
<polyline points="878.5,120.7 885.5,134.6" fill="none" stroke="#c6d1e2" stroke-width="0.9"/>
<polyline points="885.5,134.6 897.8,132.8" fill="none" stroke="#c6d1e2" stroke-width="0.9"/>
<polyline points="885.5,134.6 887.5,151.1" fill="none" stroke="#c6d1e2" stroke-width="0.9"/>
<polyline points="881,87.8 889,98.3" fill="none" stroke="#c6d1e2" stroke-width="0.9"/>
<polyline points="889,98.3 903.7,96.6" fill="none" stroke="#c6d1e2" stroke-width="0.9"/>
<polyline points="889,98.3 889.8,117.4" fill="none" stroke="#c6d1e2" stroke-width="0.9"/>
<polyline points="889.8,117.4 905,114.4" fill="none" stroke="#c6d1e2" stroke-width="0.9"/>
<polyline points="889.8,117.4 897.8,132.8" fill="none" stroke="#c6d1e2" stroke-width="0.9"/>
<polyline points="897.8,132.8 912.9,127.1" fill="none" stroke="#c6d1e2" stroke-width="0.9"/>
<polyline points="897.8,132.8 903.3,144.3" fill="none" stroke="#c6d1e2" stroke-width="0.9"/>
<polyline points="896.9,86 903.7,96.6" fill="none" stroke="#c6d1e2" stroke-width="0.9"/>
<polyline points="903.7,96.6 919,91.9" fill="none" stroke="#c6d1e2" stroke-width="0.9"/>
<polyline points="903.7,96.6 905,114.4" fill="none" stroke="#c6d1e2" stroke-width="0.9"/>
<polyline points="905,114.4 919.5,104.7" fill="none" stroke="#c6d1e2" stroke-width="0.9"/>
<polyline points="905,114.4 912.9,127.1" fill="none" stroke="#c6d1e2" stroke-width="0.9"/>
<polyline points="912.9,127.1 924,123.1" fill="none" stroke="#c6d1e2" stroke-width="0.9"/>
<polyline points="919.5,141.2 927.2,133.6" fill="none" stroke="#c6d1e2" stroke-width="0.9"/>
<polyline points="919,91.9 919.5,104.7" fill="none" stroke="#c6d1e2" stroke-width="0.9"/>
<polyline points="919.5,104.7 937.9,103" fill="none" stroke="#c6d1e2" stroke-width="0.9"/>
<polyline points="919.5,104.7 924,123.1" fill="none" stroke="#c6d1e2" stroke-width="0.9"/>
<polyline points="924,123.1 938.8,117.2" fill="none" stroke="#c6d1e2" stroke-width="0.9"/>
<polyline points="924,123.1 927.2,133.6" fill="none" stroke="#c6d1e2" stroke-width="0.9"/>
<polyline points="927.2,133.6 947,129.6" fill="none" stroke="#c6d1e2" stroke-width="0.9"/>
<polyline points="927.2,133.6 933.1,150.2" fill="none" stroke="#c6d1e2" stroke-width="0.9"/>
<polyline points="931.9,86 937.9,103" fill="none" stroke="#c6d1e2" stroke-width="0.9"/>
<polyline points="937.9,103 938.8,117.2" fill="none" stroke="#c6d1e2" stroke-width="0.9"/>
<polyline points="938.8,117.2 954.3,108.8" fill="none" stroke="#c6d1e2" stroke-width="0.9"/>
<polyline points="947,129.6 958,128.1" fill="none" stroke="#c6d1e2" stroke-width="0.9"/>
<polyline points="947,129.6 951.2,142.4" fill="none" stroke="#c6d1e2" stroke-width="0.9"/>
<polyline points="942.2,84.8 947.7,95.6" fill="none" stroke="#c6d1e2" stroke-width="0.9"/>
<polyline points="947.7,95.6 964.5,92.6" fill="none" stroke="#c6d1e2" stroke-width="0.9"/>
<polyline points="947.7,95.6 954.3,108.8" fill="none" stroke="#c6d1e2" stroke-width="0.9"/>
<polyline points="954.3,108.8 966.9,106.5" fill="none" stroke="#c6d1e2" stroke-width="0.9"/>
<polyline points="954.3,108.8 958,128.1" fill="none" stroke="#c6d1e2" stroke-width="0.9"/>
<polyline points="958,128.1 969.9,120" fill="none" stroke="#c6d1e2" stroke-width="0.9"/>
<polyline points="958,128.1 961.2,140.4" fill="none" stroke="#c6d1e2" stroke-width="0.9"/>
<polyline points="966.9,106.5 979.9,100.5" fill="none" stroke="#c6d1e2" stroke-width="0.9"/>
<polyline points="966.9,106.5 969.9,120" fill="none" stroke="#c6d1e2" stroke-width="0.9"/>
<polyline points="969.9,120 989.9,116.9" fill="none" stroke="#c6d1e2" stroke-width="0.9"/>
<polyline points="979.3,133.6 992.2,127.5" fill="none" stroke="#c6d1e2" stroke-width="0.9"/>
<polyline points="979.3,133.6 982.5,147" fill="none" stroke="#c6d1e2" stroke-width="0.9"/>
<polyline points="977.1,88.8 979.9,100.5" fill="none" stroke="#c6d1e2" stroke-width="0.9"/>
<polyline points="979.9,100.5 994.7,99.2" fill="none" stroke="#c6d1e2" stroke-width="0.9"/>
<polyline points="979.9,100.5 989.9,116.9" fill="none" stroke="#c6d1e2" stroke-width="0.9"/>
<polyline points="989.9,116.9 1001.2,113.2" fill="none" stroke="#c6d1e2" stroke-width="0.9"/>
<polyline points="989.9,116.9 992.2,127.5" fill="none" stroke="#c6d1e2" stroke-width="0.9"/>
<polyline points="992.2,127.5 1007.6,123.9" fill="none" stroke="#c6d1e2" stroke-width="0.9"/>
<polyline points="992.2,127.5 993.3,143.7" fill="none" stroke="#c6d1e2" stroke-width="0.9"/>
<polyline points="994.8,83.7 994.7,99.2" fill="none" stroke="#c6d1e2" stroke-width="0.9"/>
<polyline points="1001.2,113.2 1016.1,105" fill="none" stroke="#c6d1e2" stroke-width="0.9"/>
<polyline points="1001.2,113.2 1007.6,123.9" fill="none" stroke="#c6d1e2" stroke-width="0.9"/>
<polyline points="1007.6,123.9 1018.9,121.7" fill="none" stroke="#c6d1e2" stroke-width="0.9"/>
<polyline points="1007.6,123.9 1009.3,143.4" fill="none" stroke="#c6d1e2" stroke-width="0.9"/>
<polyline points="1009.3,143.4 1025.6,137.9" fill="none" stroke="#c6d1e2" stroke-width="0.9"/>
<polyline points="1004.1,77.9 1009.2,94.5" fill="none" stroke="#c6d1e2" stroke-width="0.9"/>
<polyline points="1009.2,94.5 1022.4,86.1" fill="none" stroke="#c6d1e2" stroke-width="0.9"/>
<polyline points="1009.2,94.5 1016.1,105" fill="none" stroke="#c6d1e2" stroke-width="0.9"/>
<polyline points="1016.1,105 1028,105.9" fill="none" stroke="#c6d1e2" stroke-width="0.9"/>
<polyline points="1016.1,105 1018.9,121.7" fill="none" stroke="#c6d1e2" stroke-width="0.9"/>
<polyline points="1025.6,137.9 1041.4,132.9" fill="none" stroke="#c6d1e2" stroke-width="0.9"/>
<polyline points="1025.6,137.9 1028.5,148.7" fill="none" stroke="#c6d1e2" stroke-width="0.9"/>
<polyline points="1028,105.9 1042.8,97" fill="none" stroke="#c6d1e2" stroke-width="0.9"/>
<polyline points="1028,105.9 1035.2,113.5" fill="none" stroke="#c6d1e2" stroke-width="0.9"/>
<polyline points="1035.2,113.5 1041.4,132.9" fill="none" stroke="#c6d1e2" stroke-width="0.9"/>
<polyline points="1041.4,132.9 1054.9,123.8" fill="none" stroke="#c6d1e2" stroke-width="0.9"/>
<polyline points="1042.8,97 1057.6,91.9" fill="none" stroke="#c6d1e2" stroke-width="0.9"/>
<polyline points="1042.8,97 1048.9,110.8" fill="none" stroke="#c6d1e2" stroke-width="0.9"/>
<polyline points="1048.9,110.8 1063,108" fill="none" stroke="#c6d1e2" stroke-width="0.9"/>
<polyline points="1048.9,110.8 1054.9,123.8" fill="none" stroke="#c6d1e2" stroke-width="0.9"/>
<polyline points="1054.9,123.8 1070.4,122.9" fill="none" stroke="#c6d1e2" stroke-width="0.9"/>
<polyline points="1054.9,123.8 1055.8,141.4" fill="none" stroke="#c6d1e2" stroke-width="0.9"/>
<polyline points="1055.8,141.4 1070.2,134.9" fill="none" stroke="#c6d1e2" stroke-width="0.9"/>
<polyline points="1057.6,91.9 1063,108" fill="none" stroke="#c6d1e2" stroke-width="0.9"/>
<polyline points="1063,108 1078,101.2" fill="none" stroke="#c6d1e2" stroke-width="0.9"/>
<polyline points="1063,108 1070.4,122.9" fill="none" stroke="#c6d1e2" stroke-width="0.9"/>
<polyline points="1070.4,122.9 1082.3,115.8" fill="none" stroke="#c6d1e2" stroke-width="0.9"/>
<polyline points="1070.4,122.9 1070.2,134.9" fill="none" stroke="#c6d1e2" stroke-width="0.9"/>
<polyline points="1070.2,134.9 1087,131" fill="none" stroke="#c6d1e2" stroke-width="0.9"/>
<polyline points="1070.2,134.9 1077,150.1" fill="none" stroke="#c6d1e2" stroke-width="0.9"/>
<polyline points="1071.5,85.7 1078,101.2" fill="none" stroke="#c6d1e2" stroke-width="0.9"/>
<polyline points="1078,101.2 1093.2,96.3" fill="none" stroke="#c6d1e2" stroke-width="0.9"/>
<polyline points="1078,101.2 1082.3,115.8" fill="none" stroke="#c6d1e2" stroke-width="0.9"/>
<polyline points="1082.3,115.8 1095.2,115" fill="none" stroke="#c6d1e2" stroke-width="0.9"/>
<polyline points="1087,131 1101.8,127.4" fill="none" stroke="#c6d1e2" stroke-width="0.9"/>
<polyline points="1087,131 1090.1,142.9" fill="none" stroke="#c6d1e2" stroke-width="0.9"/>
<polyline points="1087.3,80.6 1093.2,96.3" fill="none" stroke="#c6d1e2" stroke-width="0.9"/>
<polyline points="1093.2,96.3 1103.6,93.8" fill="none" stroke="#c6d1e2" stroke-width="0.9"/>
<polyline points="1093.2,96.3 1095.2,115" fill="none" stroke="#c6d1e2" stroke-width="0.9"/>
<polyline points="1095.2,115 1101.8,127.4" fill="none" stroke="#c6d1e2" stroke-width="0.9"/>
<polyline points="1101.8,127.4 1118,121.5" fill="none" stroke="#c6d1e2" stroke-width="0.9"/>
<polyline points="1101.8,127.4 1104.1,142.5" fill="none" stroke="#c6d1e2" stroke-width="0.9"/>
<polyline points="1104.1,142.5 1117.9,134.2" fill="none" stroke="#c6d1e2" stroke-width="0.9"/>
<polyline points="1098.6,80 1103.6,93.8" fill="none" stroke="#c6d1e2" stroke-width="0.9"/>
<polyline points="1103.6,93.8 1119.3,88.1" fill="none" stroke="#c6d1e2" stroke-width="0.9"/>
<polyline points="1103.6,93.8 1111.5,104.2" fill="none" stroke="#c6d1e2" stroke-width="0.9"/>
<polyline points="1111.5,104.2 1123.4,104.9" fill="none" stroke="#c6d1e2" stroke-width="0.9"/>
<polyline points="1111.5,104.2 1118,121.5" fill="none" stroke="#c6d1e2" stroke-width="0.9"/>
<polyline points="1118,121.5 1129.5,118.9" fill="none" stroke="#c6d1e2" stroke-width="0.9"/>
<polyline points="1118,121.5 1117.9,134.2" fill="none" stroke="#c6d1e2" stroke-width="0.9"/>
<polyline points="1117.9,134.2 1134,128.2" fill="none" stroke="#c6d1e2" stroke-width="0.9"/>
<polyline points="1117.9,134.2 1125,151.8" fill="none" stroke="#c6d1e2" stroke-width="0.9"/>
<polyline points="1123.4,104.9 1141.2,99.2" fill="none" stroke="#c6d1e2" stroke-width="0.9"/>
<polyline points="1123.4,104.9 1129.5,118.9" fill="none" stroke="#c6d1e2" stroke-width="0.9"/>
<polyline points="1129.5,118.9 1145.5,112.1" fill="none" stroke="#c6d1e2" stroke-width="0.9"/>
<polyline points="1129.5,118.9 1134,128.2" fill="none" stroke="#c6d1e2" stroke-width="0.9"/>
<polyline points="1134,128.2 1148.9,125" fill="none" stroke="#c6d1e2" stroke-width="0.9"/>
<polyline points="1134,128.2 1137.4,143.7" fill="none" stroke="#c6d1e2" stroke-width="0.9"/>
<polyline points="1131.7,84.6 1141.2,99.2" fill="none" stroke="#c6d1e2" stroke-width="0.9"/>
<polyline points="1141.2,99.2 1150.4,92.6" fill="none" stroke="#c6d1e2" stroke-width="0.9"/>
<polyline points="1141.2,99.2 1145.5,112.1" fill="none" stroke="#c6d1e2" stroke-width="0.9"/>
<polyline points="1145.5,112.1 1157.3,108.8" fill="none" stroke="#c6d1e2" stroke-width="0.9"/>
<polyline points="1145.5,112.1 1148.9,125" fill="none" stroke="#c6d1e2" stroke-width="0.9"/>
<polyline points="1148.9,125 1163.8,123.7" fill="none" stroke="#c6d1e2" stroke-width="0.9"/>
<polyline points="1148.9,125 1152.4,142.4" fill="none" stroke="#c6d1e2" stroke-width="0.9"/>
<polyline points="1152.4,142.4 1167.2,138.3" fill="none" stroke="#c6d1e2" stroke-width="0.9"/>
<polyline points="1150.4,92.6 1157.3,108.8" fill="none" stroke="#c6d1e2" stroke-width="0.9"/>
<polyline points="1157.3,108.8 1174,100.8" fill="none" stroke="#c6d1e2" stroke-width="0.9"/>
<polyline points="1157.3,108.8 1163.8,123.7" fill="none" stroke="#c6d1e2" stroke-width="0.9"/>
<polyline points="1167.2,138.3 1182.5,132.9" fill="none" stroke="#c6d1e2" stroke-width="0.9"/>
<polyline points="1165.6,90.7 1174,100.8" fill="none" stroke="#c6d1e2" stroke-width="0.9"/>
<polyline points="1174,100.8 1184.7,100.2" fill="none" stroke="#c6d1e2" stroke-width="0.9"/>
<polyline points="1174,100.8 1174.2,115.5" fill="none" stroke="#c6d1e2" stroke-width="0.9"/>
<polyline points="1174.2,115.5 1190.8,112.3" fill="none" stroke="#c6d1e2" stroke-width="0.9"/>
<polyline points="1174.2,115.5 1182.5,132.9" fill="none" stroke="#c6d1e2" stroke-width="0.9"/>
<polyline points="1182.5,132.9 1196.4,126.3" fill="none" stroke="#c6d1e2" stroke-width="0.9"/>
<polyline points="1182.5,132.9 1187.9,147.2" fill="none" stroke="#c6d1e2" stroke-width="0.9"/>
<polyline points="1180.1,85.6 1184.7,100.2" fill="none" stroke="#c6d1e2" stroke-width="0.9"/>
<polyline points="1184.7,100.2 1199.7,96.1" fill="none" stroke="#c6d1e2" stroke-width="0.9"/>
<polyline points="1184.7,100.2 1190.8,112.3" fill="none" stroke="#c6d1e2" stroke-width="0.9"/>
<polyline points="1190.8,112.3 1203.9,105.4" fill="none" stroke="#c6d1e2" stroke-width="0.9"/>
<polyline points="1190.8,112.3 1196.4,126.3" fill="none" stroke="#c6d1e2" stroke-width="0.9"/>
<polyline points="1196.4,126.3 1208.7,123.4" fill="none" stroke="#c6d1e2" stroke-width="0.9"/>
<polyline points="1196.4,126.3 1201.6,140.7" fill="none" stroke="#c6d1e2" stroke-width="0.9"/>
<polyline points="1196,79 1199.7,96.1" fill="none" stroke="#c6d1e2" stroke-width="0.9"/>
<polyline points="1199.7,96.1 1213.7,90.3" fill="none" stroke="#c6d1e2" stroke-width="0.9"/>
<polyline points="1199.7,96.1 1203.9,105.4" fill="none" stroke="#c6d1e2" stroke-width="0.9"/>
<polyline points="1203.9,105.4 1220,101.1" fill="none" stroke="#c6d1e2" stroke-width="0.9"/>
<polyline points="1203.9,105.4 1208.7,123.4" fill="none" stroke="#c6d1e2" stroke-width="0.9"/>
<polyline points="1208.7,123.4 1226.6,114.2" fill="none" stroke="#c6d1e2" stroke-width="0.9"/>
<polyline points="1208.7,123.4 1216.6,132.9" fill="none" stroke="#c6d1e2" stroke-width="0.9"/>
<polyline points="1216.6,132.9 1228.8,128.9" fill="none" stroke="#c6d1e2" stroke-width="0.9"/>
<polyline points="1216.6,132.9 1217.4,152.4" fill="none" stroke="#c6d1e2" stroke-width="0.9"/>
<polyline points="1213.7,90.3 1220,101.1" fill="none" stroke="#c6d1e2" stroke-width="0.9"/>
<polyline points="1220,101.1 1234.4,95" fill="none" stroke="#c6d1e2" stroke-width="0.9"/>
<polyline points="1220,101.1 1226.6,114.2" fill="none" stroke="#c6d1e2" stroke-width="0.9"/>
<polyline points="1226.6,114.2 1237,113.7" fill="none" stroke="#c6d1e2" stroke-width="0.9"/>
<polyline points="1226.6,114.2 1228.8,128.9" fill="none" stroke="#c6d1e2" stroke-width="0.9"/>
<polyline points="1228.8,128.9 1240.6,126.1" fill="none" stroke="#c6d1e2" stroke-width="0.9"/>
<polyline points="1228.8,128.9 1236.5,146.6" fill="none" stroke="#c6d1e2" stroke-width="0.9"/>
<polyline points="1230.8,80.7 1234.4,95" fill="none" stroke="#c6d1e2" stroke-width="0.9"/>
<polyline points="1234.4,95 1246.7,91.7" fill="none" stroke="#c6d1e2" stroke-width="0.9"/>
<polyline points="1237,113.7 1256.2,108.6" fill="none" stroke="#c6d1e2" stroke-width="0.9"/>
<polyline points="1237,113.7 1240.6,126.1" fill="none" stroke="#c6d1e2" stroke-width="0.9"/>
<polyline points="1240.6,126.1 1258.4,119.8" fill="none" stroke="#c6d1e2" stroke-width="0.9"/>
<polyline points="1240.6,126.1 1250.8,140.9" fill="none" stroke="#c6d1e2" stroke-width="0.9"/>
<polyline points="1246.7,91.7 1256.2,108.6" fill="none" stroke="#c6d1e2" stroke-width="0.9"/>
<polyline points="1256.2,108.6 1265,101.3" fill="none" stroke="#c6d1e2" stroke-width="0.9"/>
<polyline points="1256.2,108.6 1258.4,119.8" fill="none" stroke="#c6d1e2" stroke-width="0.9"/>
<polyline points="1258.4,119.8 1270.2,119.5" fill="none" stroke="#c6d1e2" stroke-width="0.9"/>
<polyline points="1258.4,119.8 1259.9,135" fill="none" stroke="#c6d1e2" stroke-width="0.9"/>
<polyline points="1259.9,135 1263.6,148.2" fill="none" stroke="#c6d1e2" stroke-width="0.9"/>
<polyline points="1262.7,87.4 1265,101.3" fill="none" stroke="#c6d1e2" stroke-width="0.9"/>
<polyline points="1265,101.3 1282.6,97.5" fill="none" stroke="#c6d1e2" stroke-width="0.9"/>
<polyline points="1265,101.3 1270.2,119.5" fill="none" stroke="#c6d1e2" stroke-width="0.9"/>
<polyline points="1270.2,119.5 1285.3,110.5" fill="none" stroke="#c6d1e2" stroke-width="0.9"/>
<polyline points="1270.2,119.5 1278.9,132.8" fill="none" stroke="#c6d1e2" stroke-width="0.9"/>
<polyline points="1278.9,132.8 1289.5,129.4" fill="none" stroke="#c6d1e2" stroke-width="0.9"/>
<polyline points="1278.9,132.8 1279,147.2" fill="none" stroke="#c6d1e2" stroke-width="0.9"/>
<polyline points="1278.8,82.7 1282.6,97.5" fill="none" stroke="#c6d1e2" stroke-width="0.9"/>
<polyline points="1282.6,97.5 1297.7,94" fill="none" stroke="#c6d1e2" stroke-width="0.9"/>
<polyline points="1282.6,97.5 1285.3,110.5" fill="none" stroke="#c6d1e2" stroke-width="0.9"/>
<polyline points="1285.3,110.5 1298.6,109" fill="none" stroke="#c6d1e2" stroke-width="0.9"/>
<polyline points="1285.3,110.5 1289.5,129.4" fill="none" stroke="#c6d1e2" stroke-width="0.9"/>
<polyline points="1289.5,129.4 1304.2,122" fill="none" stroke="#c6d1e2" stroke-width="0.9"/>
<polyline points="1289.5,129.4 1295.6,140.6" fill="none" stroke="#c6d1e2" stroke-width="0.9"/>
<polyline points="1295.6,140.6 1307.9,135.6" fill="none" stroke="#c6d1e2" stroke-width="0.9"/>
<polyline points="1290.5,78.9 1297.7,94" fill="none" stroke="#c6d1e2" stroke-width="0.9"/>
<polyline points="1297.7,94 1308.7,88" fill="none" stroke="#c6d1e2" stroke-width="0.9"/>
<polyline points="1297.7,94 1298.6,109" fill="none" stroke="#c6d1e2" stroke-width="0.9"/>
<polyline points="1298.6,109 1315.7,104.9" fill="none" stroke="#c6d1e2" stroke-width="0.9"/>
<polyline points="1298.6,109 1304.2,122" fill="none" stroke="#c6d1e2" stroke-width="0.9"/>
<polyline points="1304.2,122 1318.3,120.1" fill="none" stroke="#c6d1e2" stroke-width="0.9"/>
<polyline points="1304.2,122 1307.9,135.6" fill="none" stroke="#c6d1e2" stroke-width="0.9"/>
<polyline points="1307.9,135.6 1324.9,130" fill="none" stroke="#c6d1e2" stroke-width="0.9"/>
<polyline points="1307.9,135.6 1313.2,149.7" fill="none" stroke="#c6d1e2" stroke-width="0.9"/>
<polyline points="1315.7,104.9 1326.3,96" fill="none" stroke="#c6d1e2" stroke-width="0.9"/>
<polyline points="1315.7,104.9 1318.3,120.1" fill="none" stroke="#c6d1e2" stroke-width="0.9"/>
<polyline points="1318.3,120.1 1334.5,109.3" fill="none" stroke="#c6d1e2" stroke-width="0.9"/>
<polyline points="1318.3,120.1 1324.9,130" fill="none" stroke="#c6d1e2" stroke-width="0.9"/>
<polyline points="1324.9,130 1336.3,128.6" fill="none" stroke="#c6d1e2" stroke-width="0.9"/>
<polyline points="1324.9,130 1329.2,144.1" fill="none" stroke="#c6d1e2" stroke-width="0.9"/>
<polyline points="1329.2,144.1 1342.4,138" fill="none" stroke="#c6d1e2" stroke-width="0.9"/>
<polyline points="1324.8,81 1326.3,96" fill="none" stroke="#c6d1e2" stroke-width="0.9"/>
<polyline points="1326.3,96 1341,92" fill="none" stroke="#c6d1e2" stroke-width="0.9"/>
<polyline points="1326.3,96 1334.5,109.3" fill="none" stroke="#c6d1e2" stroke-width="0.9"/>
<polyline points="1334.5,109.3 1345.2,108.5" fill="none" stroke="#c6d1e2" stroke-width="0.9"/>
<polyline points="1334.5,109.3 1336.3,128.6" fill="none" stroke="#c6d1e2" stroke-width="0.9"/>
<polyline points="1336.3,128.6 1351.6,121.7" fill="none" stroke="#c6d1e2" stroke-width="0.9"/>
<polyline points="1342.4,138 1357.2,136.4" fill="none" stroke="#c6d1e2" stroke-width="0.9"/>
<polyline points="1342.4,138 1349,155.7" fill="none" stroke="#c6d1e2" stroke-width="0.9"/>
<polyline points="1341,92 1345.2,108.5" fill="none" stroke="#c6d1e2" stroke-width="0.9"/>
<polyline points="1345.2,108.5 1362.8,104.3" fill="none" stroke="#c6d1e2" stroke-width="0.9"/>
<polyline points="1351.6,121.7 1357.2,136.4" fill="none" stroke="#c6d1e2" stroke-width="0.9"/>
<polyline points="1357.2,136.4 1371.9,129.7" fill="none" stroke="#c6d1e2" stroke-width="0.9"/>
<polyline points="1357.2,136.4 1361.6,152.1" fill="none" stroke="#c6d1e2" stroke-width="0.9"/>
<polyline points="1356.2,91.5 1362.8,104.3" fill="none" stroke="#c6d1e2" stroke-width="0.9"/>
<polyline points="1362.8,104.3 1378.7,96.5" fill="none" stroke="#c6d1e2" stroke-width="0.9"/>
<polyline points="1362.8,104.3 1366.9,118" fill="none" stroke="#c6d1e2" stroke-width="0.9"/>
<polyline points="1366.9,118 1371.9,129.7" fill="none" stroke="#c6d1e2" stroke-width="0.9"/>
<polyline points="1371.9,129.7 1385.8,124.6" fill="none" stroke="#c6d1e2" stroke-width="0.9"/>
<polyline points="1375,147.9 1389.8,138.3" fill="none" stroke="#c6d1e2" stroke-width="0.9"/>
<polyline points="1378.7,96.5 1378,112.4" fill="none" stroke="#c6d1e2" stroke-width="0.9"/>
<polyline points="1378,112.4 1397.5,105.8" fill="none" stroke="#c6d1e2" stroke-width="0.9"/>
<polyline points="1378,112.4 1385.8,124.6" fill="none" stroke="#c6d1e2" stroke-width="0.9"/>
<polyline points="1385.8,124.6 1402.6,121.8" fill="none" stroke="#c6d1e2" stroke-width="0.9"/>
<polyline points="1389.8,138.3 1401.6,135.9" fill="none" stroke="#c6d1e2" stroke-width="0.9"/>
<polyline points="1389.8,138.3 1395.2,156.3" fill="none" stroke="#c6d1e2" stroke-width="0.9"/>
<polyline points="1384.9,82 1387.9,94.7" fill="none" stroke="#c6d1e2" stroke-width="0.9"/>
<polyline points="1387.9,94.7 1403.8,86.6" fill="none" stroke="#c6d1e2" stroke-width="0.9"/>
<polyline points="1397.5,105.8 1402.6,121.8" fill="none" stroke="#c6d1e2" stroke-width="0.9"/>
<polyline points="1402.6,121.8 1401.6,135.9" fill="none" stroke="#c6d1e2" stroke-width="0.9"/>
<polyline points="1401.6,135.9 1418.2,129" fill="none" stroke="#c6d1e2" stroke-width="0.9"/>
<polyline points="1401.6,135.9 1408.5,148.9" fill="none" stroke="#c6d1e2" stroke-width="0.9"/>
<polyline points="1403.8,86.6 1407.7,105.7" fill="none" stroke="#c6d1e2" stroke-width="0.9"/>
<polyline points="1407.7,105.7 1422.2,99.1" fill="none" stroke="#c6d1e2" stroke-width="0.9"/>
<polyline points="1407.7,105.7 1411.9,117.7" fill="none" stroke="#c6d1e2" stroke-width="0.9"/>
<polyline points="1411.9,117.7 1430.3,113" fill="none" stroke="#c6d1e2" stroke-width="0.9"/>
<polyline points="1411.9,117.7 1418.2,129" fill="none" stroke="#c6d1e2" stroke-width="0.9"/>
<polyline points="1418.2,129 1422.7,143.7" fill="none" stroke="#c6d1e2" stroke-width="0.9"/>
<polyline points="1416.6,85.1 1422.2,99.1" fill="none" stroke="#c6d1e2" stroke-width="0.9"/>
<polyline points="1422.2,99.1 1440.6,94" fill="none" stroke="#c6d1e2" stroke-width="0.9"/>
<polyline points="1422.2,99.1 1430.3,113" fill="none" stroke="#c6d1e2" stroke-width="0.9"/>
<polyline points="1430.3,113 1442.7,105.6" fill="none" stroke="#c6d1e2" stroke-width="0.9"/>
<polyline points="1430.3,113 1430,125.9" fill="none" stroke="#c6d1e2" stroke-width="0.9"/>
<polyline points="1430,125.9 1439.2,143.4" fill="none" stroke="#c6d1e2" stroke-width="0.9"/>
<polyline points="1439.2,143.4 1452.8,133.2" fill="none" stroke="#c6d1e2" stroke-width="0.9"/>
<polyline points="1433.6,80.7 1440.6,94" fill="none" stroke="#c6d1e2" stroke-width="0.9"/>
<polyline points="1440.6,94 1450.2,89" fill="none" stroke="#c6d1e2" stroke-width="0.9"/>
<polyline points="1440.6,94 1442.7,105.6" fill="none" stroke="#c6d1e2" stroke-width="0.9"/>
<polyline points="1442.7,105.6 1455.2,103.3" fill="none" stroke="#c6d1e2" stroke-width="0.9"/>
<polyline points="1448.6,123.6 1464.2,117.4" fill="none" stroke="#c6d1e2" stroke-width="0.9"/>
<polyline points="1448.6,123.6 1452.8,133.2" fill="none" stroke="#c6d1e2" stroke-width="0.9"/>
<polyline points="1452.8,133.2 1467.2,130.4" fill="none" stroke="#c6d1e2" stroke-width="0.9"/>
<polyline points="1452.8,133.2 1457.6,149.1" fill="none" stroke="#c6d1e2" stroke-width="0.9"/>
<polyline points="1450.2,89 1455.2,103.3" fill="none" stroke="#c6d1e2" stroke-width="0.9"/>
<polyline points="1455.2,103.3 1471,99.2" fill="none" stroke="#c6d1e2" stroke-width="0.9"/>
<polyline points="1455.2,103.3 1464.2,117.4" fill="none" stroke="#c6d1e2" stroke-width="0.9"/>
<polyline points="1464.2,117.4 1476.8,109.7" fill="none" stroke="#c6d1e2" stroke-width="0.9"/>
<polyline points="1464.2,117.4 1467.2,130.4" fill="none" stroke="#c6d1e2" stroke-width="0.9"/>
<polyline points="1467.2,130.4 1480.6,123.7" fill="none" stroke="#c6d1e2" stroke-width="0.9"/>
<polyline points="1467.2,130.4 1473.1,146.7" fill="none" stroke="#c6d1e2" stroke-width="0.9"/>
<polyline points="1473.1,146.7 1486.4,138.5" fill="none" stroke="#c6d1e2" stroke-width="0.9"/>
<polyline points="1471,99.2 1488.4,94.9" fill="none" stroke="#c6d1e2" stroke-width="0.9"/>
<polyline points="1476.8,109.7 1490.1,105" fill="none" stroke="#c6d1e2" stroke-width="0.9"/>
<polyline points="1476.8,109.7 1480.6,123.7" fill="none" stroke="#c6d1e2" stroke-width="0.9"/>
<polyline points="1480.6,123.7 1495.3,121.4" fill="none" stroke="#c6d1e2" stroke-width="0.9"/>
<polyline points="1480.6,123.7 1486.4,138.5" fill="none" stroke="#c6d1e2" stroke-width="0.9"/>
<polyline points="1480.4,78.5 1488.4,94.9" fill="none" stroke="#c6d1e2" stroke-width="0.9"/>
<polyline points="1488.4,94.9 1501.2,89.1" fill="none" stroke="#c6d1e2" stroke-width="0.9"/>
<polyline points="1488.4,94.9 1490.1,105" fill="none" stroke="#c6d1e2" stroke-width="0.9"/>
<polyline points="1490.1,105 1503.4,104.9" fill="none" stroke="#c6d1e2" stroke-width="0.9"/>
<polyline points="1490.1,105 1495.3,121.4" fill="none" stroke="#c6d1e2" stroke-width="0.9"/>
<polyline points="1495.3,121.4 1507.8,117.9" fill="none" stroke="#c6d1e2" stroke-width="0.9"/>
<polyline points="1501.7,134.5 1514.1,134.3" fill="none" stroke="#c6d1e2" stroke-width="0.9"/>
<polyline points="1501.2,89.1 1503.4,104.9" fill="none" stroke="#c6d1e2" stroke-width="0.9"/>
<polyline points="1503.4,104.9 1517.3,96.1" fill="none" stroke="#c6d1e2" stroke-width="0.9"/>
<polyline points="1503.4,104.9 1507.8,117.9" fill="none" stroke="#c6d1e2" stroke-width="0.9"/>
<polyline points="1507.8,117.9 1521.6,112.3" fill="none" stroke="#c6d1e2" stroke-width="0.9"/>
<polyline points="1514.1,134.3 1528.1,129.6" fill="none" stroke="#c6d1e2" stroke-width="0.9"/>
<polyline points="1511.7,83.6 1517.3,96.1" fill="none" stroke="#c6d1e2" stroke-width="0.9"/>
<polyline points="1517.3,96.1 1533.4,94.9" fill="none" stroke="#c6d1e2" stroke-width="0.9"/>
<polyline points="1517.3,96.1 1521.6,112.3" fill="none" stroke="#c6d1e2" stroke-width="0.9"/>
<polyline points="1521.6,112.3 1538.2,106.9" fill="none" stroke="#c6d1e2" stroke-width="0.9"/>
<polyline points="1521.6,112.3 1528.1,129.6" fill="none" stroke="#c6d1e2" stroke-width="0.9"/>
<polyline points="1528.1,129.6 1543.1,119.2" fill="none" stroke="#c6d1e2" stroke-width="0.9"/>
<polyline points="1533.4,94.9 1549.4,89.8" fill="none" stroke="#c6d1e2" stroke-width="0.9"/>
<polyline points="1533.4,94.9 1538.2,106.9" fill="none" stroke="#c6d1e2" stroke-width="0.9"/>
<polyline points="1538.2,106.9 1552.9,100.4" fill="none" stroke="#c6d1e2" stroke-width="0.9"/>
<polyline points="1538.2,106.9 1543.1,119.2" fill="none" stroke="#c6d1e2" stroke-width="0.9"/>
<polyline points="1543.1,119.2 1557.8,118.4" fill="none" stroke="#c6d1e2" stroke-width="0.9"/>
<polyline points="1549.4,89.8 1552.9,100.4" fill="none" stroke="#c6d1e2" stroke-width="0.9"/>
<polyline points="1552.9,100.4 1565.7,98.8" fill="none" stroke="#c6d1e2" stroke-width="0.9"/>
<polyline points="1552.9,100.4 1557.8,118.4" fill="none" stroke="#c6d1e2" stroke-width="0.9"/>
<polyline points="1508,391.2 1516.3,392.2" fill="none" stroke="#c6d1e2" stroke-width="1.0"/>
<polyline points="1500.8,403.3 1518.2,411.5" fill="none" stroke="#c6d1e2" stroke-width="1.0"/>
<polyline points="1500.8,426.9 1513.3,419.9" fill="none" stroke="#c6d1e2" stroke-width="1.0"/>
<polyline points="1530.6,368.6 1521.4,379.1" fill="none" stroke="#c6d1e2" stroke-width="1.0"/>
<polyline points="1521.4,379.1 1537.5,377" fill="none" stroke="#c6d1e2" stroke-width="1.0"/>
<polyline points="1521.4,379.1 1516.3,392.2" fill="none" stroke="#c6d1e2" stroke-width="1.0"/>
<polyline points="1518.2,411.5 1535.1,412.9" fill="none" stroke="#c6d1e2" stroke-width="1.0"/>
<polyline points="1513.3,419.9 1530.6,425.4" fill="none" stroke="#c6d1e2" stroke-width="1.0"/>
<polyline points="1513.3,419.9 1506.6,440.9" fill="none" stroke="#c6d1e2" stroke-width="1.0"/>
<polyline points="1504.9,477.1 1514.2,476.8" fill="none" stroke="#c6d1e2" stroke-width="1.0"/>
<polyline points="1502,485.4 1517.2,486.4" fill="none" stroke="#c6d1e2" stroke-width="1.0"/>
<polyline points="1499.5,501.5 1511.8,503.3" fill="none" stroke="#c6d1e2" stroke-width="1.0"/>
<polyline points="1498.8,516.3 1514,523.9" fill="none" stroke="#c6d1e2" stroke-width="1.0"/>
<polyline points="1550.8,351.5 1557.3,358" fill="none" stroke="#c6d1e2" stroke-width="1.0"/>
<polyline points="1544.6,364.9 1561.2,367.8" fill="none" stroke="#c6d1e2" stroke-width="1.0"/>
<polyline points="1544.6,364.9 1537.5,377" fill="none" stroke="#c6d1e2" stroke-width="1.0"/>
<polyline points="1537.5,377 1548.8,389" fill="none" stroke="#c6d1e2" stroke-width="1.0"/>
<polyline points="1537.5,377 1540.6,396.5" fill="none" stroke="#c6d1e2" stroke-width="1.0"/>
<polyline points="1540.6,396.5 1548.3,403.7" fill="none" stroke="#c6d1e2" stroke-width="1.0"/>
<polyline points="1540.6,396.5 1535.1,412.9" fill="none" stroke="#c6d1e2" stroke-width="1.0"/>
<polyline points="1535.1,412.9 1530.6,425.4" fill="none" stroke="#c6d1e2" stroke-width="1.0"/>
<polyline points="1530.6,425.4 1542.9,435.7" fill="none" stroke="#c6d1e2" stroke-width="1.0"/>
<polyline points="1530.6,425.4 1523.3,441.7" fill="none" stroke="#c6d1e2" stroke-width="1.0"/>
<polyline points="1523.3,441.7 1540.8,442.6" fill="none" stroke="#c6d1e2" stroke-width="1.0"/>
<polyline points="1523.3,441.7 1525.2,460.8" fill="none" stroke="#c6d1e2" stroke-width="1.0"/>
<polyline points="1525.2,460.8 1514.2,476.8" fill="none" stroke="#c6d1e2" stroke-width="1.0"/>
<polyline points="1514.2,476.8 1517.2,486.4" fill="none" stroke="#c6d1e2" stroke-width="1.0"/>
<polyline points="1517.2,486.4 1535.1,492.5" fill="none" stroke="#c6d1e2" stroke-width="1.0"/>
<polyline points="1517.2,486.4 1511.8,503.3" fill="none" stroke="#c6d1e2" stroke-width="1.0"/>
<polyline points="1511.8,503.3 1527.9,505.1" fill="none" stroke="#c6d1e2" stroke-width="1.0"/>
<polyline points="1514,523.9 1532.6,521.9" fill="none" stroke="#c6d1e2" stroke-width="1.0"/>
<polyline points="1506.1,535.2 1524.7,540.1" fill="none" stroke="#c6d1e2" stroke-width="1.0"/>
<polyline points="1502.4,551.1 1516.6,555.8" fill="none" stroke="#c6d1e2" stroke-width="1.0"/>
<polyline points="1500.6,588.2 1509.6,589.2" fill="none" stroke="#c6d1e2" stroke-width="1.0"/>
<polyline points="1561.2,367.8 1548.8,389" fill="none" stroke="#c6d1e2" stroke-width="1.0"/>
<polyline points="1548.8,389 1575.3,383.3" fill="none" stroke="#c6d1e2" stroke-width="1.0"/>
<polyline points="1548.3,403.7 1566.2,399.2" fill="none" stroke="#c6d1e2" stroke-width="1.0"/>
<polyline points="1544,416.9 1564.7,422.6" fill="none" stroke="#c6d1e2" stroke-width="1.0"/>
<polyline points="1544,416.9 1542.9,435.7" fill="none" stroke="#c6d1e2" stroke-width="1.0"/>
<polyline points="1542.9,435.7 1540.8,442.6" fill="none" stroke="#c6d1e2" stroke-width="1.0"/>
<polyline points="1540.8,442.6 1561.3,453.5" fill="none" stroke="#c6d1e2" stroke-width="1.0"/>
<polyline points="1535,465.8 1550,467.5" fill="none" stroke="#c6d1e2" stroke-width="1.0"/>
<polyline points="1535,465.8 1540.8,481.4" fill="none" stroke="#c6d1e2" stroke-width="1.0"/>
<polyline points="1540.8,481.4 1554.9,481.6" fill="none" stroke="#c6d1e2" stroke-width="1.0"/>
<polyline points="1535.1,492.5 1544.2,498.6" fill="none" stroke="#c6d1e2" stroke-width="1.0"/>
<polyline points="1527.9,505.1 1544,508.9" fill="none" stroke="#c6d1e2" stroke-width="1.0"/>
<polyline points="1527.9,505.1 1532.6,521.9" fill="none" stroke="#c6d1e2" stroke-width="1.0"/>
<polyline points="1532.6,521.9 1538.5,527.2" fill="none" stroke="#c6d1e2" stroke-width="1.0"/>
<polyline points="1532.6,521.9 1524.7,540.1" fill="none" stroke="#c6d1e2" stroke-width="1.0"/>
<polyline points="1524.7,540.1 1534.9,542.6" fill="none" stroke="#c6d1e2" stroke-width="1.0"/>
<polyline points="1524.7,540.1 1516.6,555.8" fill="none" stroke="#c6d1e2" stroke-width="1.0"/>
<polyline points="1516.6,555.8 1536.1,561.1" fill="none" stroke="#c6d1e2" stroke-width="1.0"/>
<polyline points="1516.6,555.8 1522,571.1" fill="none" stroke="#c6d1e2" stroke-width="1.0"/>
<polyline points="1522,571.1 1530.7,579.1" fill="none" stroke="#c6d1e2" stroke-width="1.0"/>
<polyline points="1509.6,589.2 1525.1,588.9" fill="none" stroke="#c6d1e2" stroke-width="1.0"/>
<polyline points="1554.9,481.6 1570.9,485.4" fill="none" stroke="#c6d1e2" stroke-width="1.0"/>
<polyline points="1554.9,481.6 1544.2,498.6" fill="none" stroke="#c6d1e2" stroke-width="1.0"/>
<polyline points="1544.2,498.6 1544,508.9" fill="none" stroke="#c6d1e2" stroke-width="1.0"/>
<polyline points="1544,508.9 1558.8,516.3" fill="none" stroke="#c6d1e2" stroke-width="1.0"/>
<polyline points="1544,508.9 1538.5,527.2" fill="none" stroke="#c6d1e2" stroke-width="1.0"/>
<polyline points="1538.5,527.2 1559.5,536.9" fill="none" stroke="#c6d1e2" stroke-width="1.0"/>
<polyline points="1534.9,542.6 1552.4,549.7" fill="none" stroke="#c6d1e2" stroke-width="1.0"/>
<polyline points="1534.9,542.6 1536.1,561.1" fill="none" stroke="#c6d1e2" stroke-width="1.0"/>
<polyline points="1536.1,561.1 1549.4,567.3" fill="none" stroke="#c6d1e2" stroke-width="1.0"/>
<polyline points="1536.1,561.1 1530.7,579.1" fill="none" stroke="#c6d1e2" stroke-width="1.0"/>
<polyline points="1552.4,549.7 1570.4,548.6" fill="none" stroke="#c6d1e2" stroke-width="1.0"/>
<polyline points="1552.4,549.7 1549.4,567.3" fill="none" stroke="#c6d1e2" stroke-width="1.0"/>
<polyline points="1265.5,650.3 1280.6,652.6" fill="none" stroke="#c6d1e2" stroke-width="1.0"/>
<polyline points="1265.5,657.3 1282.8,658.6" fill="none" stroke="#c6d1e2" stroke-width="1.0"/>
<polyline points="1280.8,632.2 1297.3,638" fill="none" stroke="#c6d1e2" stroke-width="1.0"/>
<polyline points="1280.8,632.2 1280.6,652.6" fill="none" stroke="#c6d1e2" stroke-width="1.0"/>
<polyline points="1280.6,652.6 1293.4,654.5" fill="none" stroke="#c6d1e2" stroke-width="1.0"/>
<polyline points="1280.6,652.6 1282.8,658.6" fill="none" stroke="#c6d1e2" stroke-width="1.0"/>
<polyline points="1282.8,658.6 1293,662.7" fill="none" stroke="#c6d1e2" stroke-width="1.0"/>
<polyline points="1282.8,658.6 1277.1,675.7" fill="none" stroke="#c6d1e2" stroke-width="1.0"/>
<polyline points="1300.5,622.6 1297.3,638" fill="none" stroke="#c6d1e2" stroke-width="1.0"/>
<polyline points="1297.3,638 1293.4,654.5" fill="none" stroke="#c6d1e2" stroke-width="1.0"/>
<polyline points="1293.4,654.5 1293,662.7" fill="none" stroke="#c6d1e2" stroke-width="1.0"/>
<polyline points="1314.8,628.8 1306.8,639.3" fill="none" stroke="#c6d1e2" stroke-width="1.0"/>
<polyline points="1307.9,649.4 1320.7,651.8" fill="none" stroke="#c6d1e2" stroke-width="1.0"/>
<polyline points="1307.9,649.4 1309.7,662.5" fill="none" stroke="#c6d1e2" stroke-width="1.0"/>
<polyline points="1321.9,644.2 1334.6,638.1" fill="none" stroke="#c6d1e2" stroke-width="1.0"/>
<polyline points="1321.9,644.2 1320.7,651.8" fill="none" stroke="#c6d1e2" stroke-width="1.0"/>
<polyline points="1320.7,651.8 1329.6,654.6" fill="none" stroke="#c6d1e2" stroke-width="1.0"/>
<polyline points="1336.6,628.9 1334.6,638.1" fill="none" stroke="#c6d1e2" stroke-width="1.0"/>
<polyline points="1334.6,638.1 1346.8,646.9" fill="none" stroke="#c6d1e2" stroke-width="1.0"/>
<polyline points="1334.6,638.1 1329.6,654.6" fill="none" stroke="#c6d1e2" stroke-width="1.0"/>
<polyline points="1329.6,654.6 1337.2,665.8" fill="none" stroke="#c6d1e2" stroke-width="1.0"/>
<polyline points="1346.8,646.9 1346.3,656.4" fill="none" stroke="#c6d1e2" stroke-width="1.0"/>
<polyline points="1346.3,656.4 1349.7,670.4" fill="none" stroke="#c6d1e2" stroke-width="1.0"/>
<polyline points="1364.8,630.3 1362.7,642.3" fill="none" stroke="#c6d1e2" stroke-width="1.0"/>
<polyline points="1362.7,642.3 1375.8,648.3" fill="none" stroke="#c6d1e2" stroke-width="1.0"/>
<polyline points="1362.7,642.3 1363.8,656.2" fill="none" stroke="#c6d1e2" stroke-width="1.0"/>
<polyline points="1363.8,656.2 1369,661.5" fill="none" stroke="#c6d1e2" stroke-width="1.0"/>
<polyline points="1363.8,656.2 1356.2,673.3" fill="none" stroke="#c6d1e2" stroke-width="1.0"/>
<polyline points="1374.4,635 1375.8,648.3" fill="none" stroke="#c6d1e2" stroke-width="1.0"/>
<polyline points="1375.8,648.3 1390.7,643.9" fill="none" stroke="#c6d1e2" stroke-width="1.0"/>
<polyline points="1375.8,648.3 1369,661.5" fill="none" stroke="#c6d1e2" stroke-width="1.0"/>
<polyline points="1390.7,643.9 1398,644.5" fill="none" stroke="#c6d1e2" stroke-width="1.0"/>
<polyline points="1390.7,643.9 1385.6,659.3" fill="none" stroke="#c6d1e2" stroke-width="1.0"/>
<polyline points="1385.6,659.3 1398.7,661.7" fill="none" stroke="#c6d1e2" stroke-width="1.0"/>
<polyline points="1385.6,659.3 1381.1,670.1" fill="none" stroke="#c6d1e2" stroke-width="1.0"/>
<polyline points="1405,632.4 1398,644.5" fill="none" stroke="#c6d1e2" stroke-width="1.0"/>
<polyline points="1398,644.5 1398.7,661.7" fill="none" stroke="#c6d1e2" stroke-width="1.0"/>
<polyline points="1410.4,635 1412.7,647.1" fill="none" stroke="#c6d1e2" stroke-width="1.0"/>
<polyline points="1412.7,647.1 1421.3,651.2" fill="none" stroke="#c6d1e2" stroke-width="1.0"/>
<polyline points="1412.7,647.1 1413.5,666.1" fill="none" stroke="#c6d1e2" stroke-width="1.0"/>
<polyline points="410,650 470,645 520,661" fill="none" stroke="#c6d1e2" stroke-width="1.0"/>
<polyline points="600,637 640,661" fill="none" stroke="#c6d1e2" stroke-width="1.0"/>
<polyline points="700,661 760,640 800,637" fill="none" stroke="#c6d1e2" stroke-width="1.0"/>
<polyline points="930,637 1000,661" fill="none" stroke="#c6d1e2" stroke-width="1.0"/>
<polyline points="1100,661 1160,640 1230,637" fill="none" stroke="#c6d1e2" stroke-width="1.0"/>
<polyline points="1280,637 1300,661" fill="none" stroke="#c6d1e2" stroke-width="1.0"/>
<polyline points="1510,150 1530,200 1525,260 1540,320" fill="none" stroke="#c6d1e2" stroke-width="1.0"/>
<polyline points="733,93 762,137" fill="none" stroke="#93a7c4" stroke-width="6"/>
<polyline points="831,661 841,635" fill="none" stroke="#8fa3c0" stroke-width="6"/>
<rect x="857" y="626" width="41" height="14" rx="4" fill="#fff" stroke="#11a02a" stroke-width="1.5"/><circle cx="841.5" cy="638" r="2" fill="#11a02a"/>
<text x="356" y="276" font-family="Liberation Sans" font-size="13" fill="#d23c3c">ری کسلا</text>
<path d="M199.8 465.8 A12.0 12.0 0 1 1 216.2 465.8 L208 473.5Z" fill="#9a9a9a" opacity="0.5" transform="translate(0.6 1.2)"/><path d="M199.8 465.8 A12.0 12.0 0 1 1 216.2 465.8 L208 473.5Z" fill="#fff"/><circle cx="208" cy="457" r="9.8" fill="#4285f4"/><path d="M203.5 451.5 L205.3 451.8 L206.6 459 H212.2 L213.6 454 H205.8" fill="none" stroke="#fff" stroke-width="1.4"/><path d="M206.4 455 H213 L212 458.2 H207Z" fill="#a8cbff"/><rect x="205.8" y="461" width="1.8" height="1.4" fill="#fff"/><rect x="210.5" y="461" width="1.8" height="1.4" fill="#fff"/>
<path d="M337.7 490.9 A12.2 12.2 0 1 1 354.3 490.9 L346 498.7Z" fill="#9a9a9a" opacity="0.5" transform="translate(0.6 1.2)"/><path d="M337.7 490.9 A12.2 12.2 0 1 1 354.3 490.9 L346 498.7Z" fill="#fff"/><circle cx="346" cy="482" r="10" fill="#f5832a"/><path d="M341.5 476 V480.5 Q341.5 482 343 482.5 V488 M343 476 V480 M344.5 476 V480.5 Q344.5 482 343 482.5" fill="none" stroke="#fff" stroke-width="1.1"/><path d="M348 488 V476 Q350.5 478 350.5 482.5 H348.5" fill="#fff" stroke="#fff" stroke-width="1"/>
<text x="360" y="488" font-family="Liberation Sans" font-size="14" fill="#e8842a">404 افي</text>
<path d="M198.4 611.2 A11.2 11.2 0 1 1 213.6 611.2 L206 618.7Z" fill="#9a9a9a" opacity="0.5" transform="translate(0.6 1.2)"/><path d="M198.4 611.2 A11.2 11.2 0 1 1 213.6 611.2 L206 618.7Z" fill="#fff"/><circle cx="206" cy="603" r="9" fill="#7a5cd6"/><rect x="202" y="599" width="5" height="8" fill="#fff"/><rect x="208" y="601" width="2" height="4" fill="#fff"/>
<text x="1193" y="102" font-family="Liberation Sans" font-size="12" fill="#5f6a78">Mosque</text>
<text x="1386" y="97" font-family="Liberation Sans" font-size="12" fill="#5f6a78">Warehouse</text>
<text x="1256" y="131" font-family="Liberation Sans" font-size="16" fill="#5f6a78">السوق الشعبي كسلا</text>
<path d="M1391.0 131.6 A11.7 11.7 0 1 1 1407.0 131.6 L1399 139.2Z" fill="#9a9a9a" opacity="0.5" transform="translate(0.6 1.2)"/><path d="M1391.0 131.6 A11.7 11.7 0 1 1 1407.0 131.6 L1399 139.2Z" fill="#fff"/><circle cx="1399" cy="123" r="9.5" fill="#7d8590"/><circle cx="1399" cy="123" r="4" fill="#fff"/><circle cx="1399" cy="123" r="2" fill="#7d8590"/>
<path d="M1505.4 276.2 A11.2 11.2 0 1 1 1520.6 276.2 L1513 283.7Z" fill="#9a9a9a" opacity="0.5" transform="translate(0.6 1.2)"/><path d="M1505.4 276.2 A11.2 11.2 0 1 1 1520.6 276.2 L1513 283.7Z" fill="#fff"/><circle cx="1513" cy="268" r="9" fill="#7d8a99"/><rect x="1510" y="265" width="2" height="7" fill="#fff"/><rect x="1513" y="266" width="2" height="6" fill="#fff"/>
<path d="M1524.7 444.9 A12.2 12.2 0 1 1 1541.3 444.9 L1533 452.7Z" fill="#9a9a9a" opacity="0.5" transform="translate(0.6 1.2)"/><path d="M1524.7 444.9 A12.2 12.2 0 1 1 1541.3 444.9 L1533 452.7Z" fill="#fff"/><circle cx="1533" cy="436" r="10" fill="#4285f4"/><path d="M1529.5 440.5 V435.5 H1536.5 V440.5Z" fill="#fff"/><path d="M1530.8 435.5 V434 A2.2 2.2 0 0 1 1535.2 434 V435.5" fill="none" stroke="#fff" stroke-width="1.2"/>
<text x="1506" y="505" font-family="Liberation Sans" font-size="13" fill="#3c78d8">رداد للخ</text>
<text x="1507" y="516" font-family="Liberation Sans" font-size="11" fill="#3c78d8">hone stor</text>
</svg>
<div class="abs" style="left:6px;top:508px;width:108px;height:26px;background:#fff;box-shadow:0 1px 3px rgba(0,0,0,.25);border-radius:2px;font-size:12px">
 <div class="abs" style="left:0;top:0;width:44px;height:26px;line-height:26px;text-align:center;font-weight:bold;color:#111">Map</div>
 <div class="abs" style="left:44px;top:0;width:1px;height:26px;background:#e6e6e6"></div>
 <div class="abs" style="left:45px;top:0;width:63px;height:26px;line-height:26px;text-align:center;color:#555">Satellite</div>
</div>
<div class="abs" style="left:10px;top:543px;font-size:18px;letter-spacing:-0.3px;font-weight:normal"><span style="color:#4285f4">G</span><span style="color:#ea4335">o</span><span style="color:#fbbc05">o</span><span style="color:#4285f4">g</span><span style="color:#34a853">l</span><span style="color:#ea4335">e</span></div>
<div class="abs" style="left:1320px;top:488px;width:26px;height:52px;background:#fff;box-shadow:0 1px 3px rgba(0,0,0,.2);border-radius:2px">
 <div class="abs" style="left:7px;top:13px;width:12px;height:2px;background:#666"></div><div class="abs" style="left:12px;top:8px;width:2px;height:12px;background:#666"></div>
 <div class="abs" style="left:4px;top:26px;width:18px;height:1px;background:#e6e6e6"></div>
 <div class="abs" style="left:7px;top:39px;width:12px;height:2px;background:#666"></div>
</div>
<div class="abs" style="left:1266px;top:553px;width:90px;height:14px;background:rgba(255,255,255,0.5)"></div><div class="abs" style="left:1271px;top:555px;font-size:10px;color:#222">200 m</div>
<div class="abs" style="left:1304px;top:559px;width:46px;height:6px;border:2px solid #222;border-top:none"></div>
<div class="abs" style="left:1341px;top:247px;width:20px;height:71px;background:#fff;border-radius:8px 0 0 8px;box-shadow:0 1px 3px rgba(0,0,0,.2)"></div>
<svg class="abs" style="left:1344px;top:276px" width="10" height="16" viewBox="0 0 10 16"><path d="M2 2 L8 8 L2 14" fill="none" stroke="#3555c6" stroke-width="1.6"/></svg>
</div>
<div class="abs" style="left:203px;top:102px;width:101px;height:24px;background:#fff;border:1px solid #d0d0d0;border-radius:3px;font-size:12px;color:#111;line-height:22px;padding-left:8px">Google Maps</div>
<svg class="abs" style="left:287px;top:110px" width="10" height="7" viewBox="0 0 10 7"><path d="M0.5 0.5 H9.5 L5 6Z" fill="#333"/></svg>
<div class="abs" style="left:309px;top:101px;width:124px;height:25px;background:#fff;border:1px solid #d6d6d6;border-radius:3px;font-size:13px;color:#888;line-height:23px;padding-left:9px">Location search</div>
<div class="abs" style="left:439px;top:101px;width:30px;height:25px;background:#fff"><svg class="abs" style="left:6px;top:4px" width="18" height="18" viewBox="0 0 18 18"><path d="M8.2 15.5 H4.4 Q2.4 15.5 2.4 13.5 V4.4 Q2.4 2.4 4.4 2.4 H13.5 Q15.5 2.4 15.5 4.4 V7.2" fill="none" stroke="#555" stroke-width="1.2"/><circle cx="10.8" cy="10.3" r="3.2" fill="none" stroke="#555" stroke-width="1.2"/><path d="M13.2 12.8 L15.6 14.8" stroke="#555" stroke-width="1.3"/></svg></div><div class="abs" style="left:469px;top:101px;width:1px;height:25px;background:#cfcfcf"></div><div class="abs" style="left:470px;top:101px;width:30px;height:25px;background:#fff"><svg class="abs" style="left:6px;top:4px" width="18" height="18" viewBox="0 0 18 18"><path d="M3.1 3.2 L11 5.6 L15 12 M11 5.6 L4.6 10.8 L8 14.8" fill="none" stroke="#555" stroke-width="1.1"/><circle cx="3.1" cy="3.2" r="1.5" fill="#555"/><circle cx="8" cy="14.8" r="1.4" fill="#555"/><circle cx="4.6" cy="10.8" r="1" fill="#555"/><circle cx="11" cy="5.6" r="0.9" fill="#555"/></svg></div><div class="abs" style="left:500px;top:101px;width:1px;height:25px;background:#cfcfcf"></div><div class="abs" style="left:501px;top:101px;width:30px;height:25px;background:#fff"><svg class="abs" style="left:6px;top:4px" width="18" height="18" viewBox="0 0 18 18"><rect x="3" y="4.5" width="12" height="9" fill="none" stroke="#555" stroke-width="1.3"/><circle cx="3" cy="9" r="1.1" fill="#555"/><circle cx="15" cy="9" r="1.1" fill="#555"/><circle cx="9" cy="4.5" r="1.1" fill="#555"/><circle cx="9" cy="13.5" r="1.1" fill="#555"/></svg></div><div class="abs" style="left:531px;top:101px;width:1px;height:25px;background:#cfcfcf"></div><div class="abs" style="left:532px;top:101px;width:30px;height:25px;background:#fff"><svg class="abs" style="left:6px;top:4px" width="18" height="18" viewBox="0 0 18 18"><path d="M4.5 16 L2.5 4 Q5 2 8 3 Q11 4.5 14 3 V10 Q11 11.5 8 10.5 Q5.5 9.5 3.6 10.5" fill="none" stroke="#555" stroke-width="1"/></svg></div><div class="abs" style="left:562px;top:101px;width:1px;height:25px;background:#cfcfcf"></div><div class="abs" style="left:563px;top:101px;width:30px;height:25px;background:#fff"><svg class="abs" style="left:6px;top:4px" width="18" height="18" viewBox="0 0 18 18"><path d="M10.8 6.6 L15 2.2 Q16 1.6 16.4 2.6 L12 7.6 M2.8 9.6 L8.4 5.6 L12.4 9.6 L7.6 15.4 Z M4.6 11.6 L6.4 13.6 M6 10.4 L8.2 12.8" fill="none" stroke="#555" stroke-width="1.1"/><path d="M8.4 5.6 L10.8 6.6 L12 7.6 L12.4 9.6" fill="none" stroke="#555" stroke-width="1.1"/></svg></div><div class="abs" style="left:593px;top:101px;width:1px;height:25px;background:#cfcfcf"></div><div class="abs" style="left:594px;top:101px;width:30px;height:25px;background:#fff"><svg class="abs" style="left:6px;top:4px" width="18" height="18" viewBox="0 0 18 18"><g fill="none" stroke="#666" stroke-width="0.9"><path d="M2.5 3.5 L3.5 2.5 L15.5 14.5 L14.5 15.5Z"/><path d="M14.5 2.5 L15.5 3.5 L4 15 L2.5 15.5 L3 14Z"/></g></svg></div><div class="abs" style="left:624px;top:101px;width:1px;height:25px;background:#cfcfcf"></div><div class="abs" style="left:625px;top:101px;width:30px;height:25px;background:#fff"><svg class="abs" style="left:6px;top:4px" width="18" height="18" viewBox="0 0 18 18"><rect x="5.5" y="2" width="7" height="14" rx="1.8" fill="#5f5f5f"/><circle cx="9" cy="5" r="1.3" fill="#fff"/><circle cx="9" cy="9" r="1.3" fill="#fff"/><circle cx="9" cy="13" r="1.3" fill="#fff"/></svg></div><div class="abs" style="left:655px;top:101px;width:1px;height:25px;background:#cfcfcf"></div><div class="abs" style="left:656px;top:101px;width:30px;height:25px;background:#fff"><svg class="abs" style="left:6px;top:4px" width="18" height="18" viewBox="0 0 18 18"><path d="M2 6 H5 L6.5 4 H11.5 L13 6 H16 V15 H2 Z" fill="none" stroke="#555" stroke-width="1.1"/><circle cx="9" cy="10.2" r="2.7" fill="none" stroke="#555" stroke-width="1.1"/></svg></div><div class="abs" style="left:686px;top:101px;width:1px;height:25px;background:#cfcfcf"></div><div class="abs" style="left:687px;top:101px;width:30px;height:25px;background:#fff"><svg class="abs" style="left:6px;top:4px" width="18" height="18" viewBox="0 0 18 18"><path d="M3 15 V10 H6 V15 M7 15 V4 Q7 3 8 3 H10 Q11 3 11 4 V15 M12 15 V8 H15 V15 M2 15.5 H16" fill="none" stroke="#555" stroke-width="1.1"/></svg></div><div class="abs" style="left:717px;top:101px;width:1px;height:25px;background:#cfcfcf"></div><div class="abs" style="left:718px;top:101px;width:30px;height:25px;background:#fff"><svg class="abs" style="left:6px;top:4px" width="18" height="18" viewBox="0 0 18 18"><rect x="7" y="7" width="4" height="4" fill="none" stroke="#3555c6" stroke-width="1.2"/><circle cx="9" cy="9" r="0.9" fill="#3555c6"/><path d="M2 2 L6 6 M6 3.5 V6 H3.5 M16 2 L12 6 M12 3.5 V6 H14.5 M2 16 L6 12 M3.5 12 H6 V14.5 M16 16 L12 12 M14.5 12 H12 V14.5" fill="none" stroke="#3555c6" stroke-width="1.1"/></svg></div><div class="abs" style="left:748px;top:101px;width:1px;height:25px;background:#cfcfcf"></div><div class="abs" style="left:749px;top:101px;width:30px;height:25px;background:#fff"><svg class="abs" style="left:6px;top:4px" width="18" height="18" viewBox="0 0 18 18"><circle cx="9" cy="9" r="5.5" fill="none" stroke="#555" stroke-width="1.1"/><circle cx="9" cy="9" r="1.8" fill="#555"/></svg></div><div class="abs" style="left:789px;top:101px;width:97px;height:25px;background:#fff;border-radius:3px"></div><svg class="abs" style="left:796px;top:105px" width="18" height="18" viewBox="0 0 18 18"><path d="M2.5 2.5 H13 L15.5 5 V15.5 H2.5 Z" fill="none" stroke="#111" stroke-width="1.8"/><rect x="5.5" y="2.5" width="6" height="4" fill="#111"/><rect x="9" y="3.2" width="1.4" height="2.6" fill="#fff"/><rect x="5" y="10" width="8" height="5.5" fill="none" stroke="#111" stroke-width="1.6"/></svg><svg class="abs" style="left:828px;top:105px" width="18" height="18" viewBox="0 0 18 18"><path d="M8 3 H3.5 Q2 3 2 4.5 V14 Q2 15.5 3.5 15.5 H13 Q14.5 15.5 14.5 14 V10" fill="none" stroke="#111" stroke-width="1.8"/><path d="M7 11 L15 3" stroke="#111" stroke-width="1.9"/><path d="M10 1.5 H16.5 V8 Z" fill="#111"/></svg><svg class="abs" style="left:861px;top:105px" width="18" height="18" viewBox="0 0 18 18"><path d="M4 4 L14 14 M14 4 L4 14" stroke="#111" stroke-width="2.6"/><path d="M1.5 1.5 H7.5 L1.5 7.5Z M16.5 1.5 V7.5 L10.5 1.5Z M1.5 16.5 V10.5 L7.5 16.5Z M16.5 16.5 H10.5 L16.5 10.5Z" fill="#111"/></svg><div class="abs" style="left:820px;top:101px;width:1px;height:25px;background:#cfcfcf"></div><div class="abs" style="left:854px;top:101px;width:1px;height:25px;background:#cfcfcf"></div><div class="abs" style="left:435px;top:90px;width:38px;height:46px;border:4px solid #f24b4b;border-radius:3px"></div><div class="abs" style="left:1468px;top:98px;width:35px;height:33px;background:#fff;border-radius:3px"></div><svg class="abs" style="left:1473px;top:103px" width="26" height="22" viewBox="0 0 26 22"><circle cx="6" cy="6" r="4.5" fill="none" stroke="#3555c6" stroke-width="1.6"/><path d="M6 3.5 V6 H8" stroke="#3555c6" stroke-width="1.2" fill="none"/><rect x="1.5" y="9" width="13" height="8" fill="#3555c6"/><path d="M15.5 9 H20 L24 13 V17 H15.5Z" fill="none" stroke="#3555c6" stroke-width="1.6"/><circle cx="6" cy="18" r="2.4" fill="#fff" stroke="#3555c6" stroke-width="1.5"/><circle cx="19.5" cy="18" r="2.4" fill="#fff" stroke="#3555c6" stroke-width="1.5"/></svg>
<!--TOOLBAR-->
<div id="dlg" class="abs" style="left:410px;top:137px;width:1100px;height:500px;background:#fff;border-radius:4px;box-shadow:0 1px 6px rgba(0,0,0,.18);overflow:hidden">
<div class="abs" style="left:0;top:0;width:1100px;height:40px;background:#3555c6;color:#fff;font-size:16px;text-align:center;line-height:40px">Box search</div>
<svg class="abs" style="left:1065px;top:13px" width="14" height="14" viewBox="0 0 14 14"><path d="M1.5 1.5 L12.5 12.5 M12.5 1.5 L1.5 12.5" stroke="#fff" stroke-width="1.6"/></svg>
<div class="abs" style="left:25px;top:60px;width:210px;height:28px;border:1px solid #dcdfe6;border-radius:3px;font-size:12px;color:#c0c4cc;line-height:26px;padding-left:15px">Enter the keywords</div>
<svg class="abs" style="left:204px;top:64px" width="20" height="20" viewBox="0 0 20 20"><circle cx="8.5" cy="8.5" r="6.5" fill="none" stroke="#c8cbd2" stroke-width="1.8"/><path d="M13.3 13.3 L17.5 17.5" stroke="#c8cbd2" stroke-width="2.4" stroke-linecap="round"/></svg>
<div class="abs" style="left:255px;top:60px;width:86px;height:28px;background:#3aaa5c;border-radius:4px;color:#fff;font-size:12.5px;line-height:28px;padding-left:35px">Export</div>
<svg class="abs" style="left:270px;top:67px" width="15" height="15" viewBox="0 0 15 15"><path d="M6 2.5 H1.5 V13.5 H12.5 V9" fill="none" stroke="#fff" stroke-width="1.5"/><path d="M4.5 10 C5 6.5 7.5 5 10.5 5 V2.5 L14 6 L10.5 9.5 V7.2 C8 7.2 6 8 4.5 10Z" fill="#fff"/></svg>
<div class="abs" style="left:351px;top:67px;width:14px;height:14px;border:1px solid #dcdfe6;border-radius:2px;background:#fff"></div>
<div class="abs" style="left:25px;top:101px;width:1050px;height:345px;overflow:hidden;border-right:1px solid #e4e8f2;border-left:1px solid #e4e8f2">
<table style="border-collapse:collapse;table-layout:fixed;width:1079px;font-size:12px;color:#555">
<colgroup><col style="width:59px"><col style="width:120px"><col style="width:120px"><col style="width:120px"><col style="width:160px"><col style="width:200px"><col style="width:300px"></colgroup>
<tr style="height:34px;background:#c5ddf8"><th style="font-weight:bold;color:#303848;border-right:1px solid #e4e8f2;padding:0 0 2px 0;text-align:center;white-space:nowrap">Index</th><th style="font-weight:bold;color:#303848;border-right:1px solid #e4e8f2;padding:0 0 2px 0;text-align:center;white-space:nowrap">Asset Name</th><th style="font-weight:bold;color:#303848;border-right:1px solid #e4e8f2;padding:0 0 2px 0;text-align:center;white-space:nowrap">Device ID</th><th style="font-weight:bold;color:#303848;border-right:1px solid #e4e8f2;padding:0 0 2px 0;text-align:center;white-space:nowrap">GNSS type</th><th style="font-weight:bold;color:#303848;border-right:1px solid #e4e8f2;padding:0 0 2px 0;text-align:center;white-space:nowrap">GPS time<svg width="9" height="12" viewBox="0 0 9 12" style="vertical-align:-1px;margin-left:6px"><path d="M4.5 0.5 L8.5 5 H0.5Z M4.5 11.5 L8.5 7 H0.5Z" fill="#8a8f99"/></svg></th><th style="font-weight:bold;color:#303848;border-right:1px solid #e4e8f2;padding:0 0 2px 0;text-align:center;white-space:nowrap">Addr.<svg width="9" height="12" viewBox="0 0 9 12" style="vertical-align:-1px;margin-left:6px"><path d="M4.5 0.5 L8.5 5 H0.5Z M4.5 11.5 L8.5 7 H0.5Z" fill="#8a8f99"/></svg></th><th style="font-weight:bold;color:#303848;border-right:1px solid #e4e8f2;padding:0 0 2px 0;text-align:center;white-space:nowrap">Status</th></tr><tr style="height:35px;background:#fff"><td style="border-right:1px solid #e4e8f2;border-bottom:1px solid #e9ecf3;text-align:center;padding:0;white-space:nowrap;overflow:hidden">1</td><td style="border-right:1px solid #e4e8f2;border-bottom:1px solid #e9ecf3;text-align:center;padding:0;white-space:nowrap;overflow:hidden">21722</td><td style="border-right:1px solid #e4e8f2;border-bottom:1px solid #e9ecf3;text-align:center;padding:0;white-space:nowrap;overflow:hidden">8025300601</td><td style="border-right:1px solid #e4e8f2;border-bottom:1px solid #e9ecf3;text-align:center;padding:0;white-space:nowrap;overflow:hidden">Base station</td><td style="border-right:1px solid #e4e8f2;border-bottom:1px solid #e9ecf3;text-align:center;padding:0;white-space:nowrap;overflow:hidden">2025-12-01 12:00:48</td><td style="border-right:1px solid #e4e8f2;border-bottom:1px solid #e9ecf3;text-align:left;padding-left:10px;white-space:nowrap;overflow:hidden">Kassala-Port Sudan Highway, ...</td><td style="border-right:1px solid #e4e8f2;border-bottom:1px solid #e9ecf3;text-align:left;padding-left:10px;white-space:nowrap;overflow:hidden">Lock rope: Pull out; Lock State: Unlock; back cover: open</td></tr><tr style="height:35px;background:#fafafa"><td style="border-right:1px solid #e4e8f2;border-bottom:1px solid #e9ecf3;text-align:center;padding:0;white-space:nowrap;overflow:hidden">2</td><td style="border-right:1px solid #e4e8f2;border-bottom:1px solid #e9ecf3;text-align:center;padding:0;white-space:nowrap;overflow:hidden">388</td><td style="border-right:1px solid #e4e8f2;border-bottom:1px solid #e9ecf3;text-align:center;padding:0;white-space:nowrap;overflow:hidden">8025203750</td><td style="border-right:1px solid #e4e8f2;border-bottom:1px solid #e9ecf3;text-align:center;padding:0;white-space:nowrap;overflow:hidden">Base station</td><td style="border-right:1px solid #e4e8f2;border-bottom:1px solid #e9ecf3;text-align:center;padding:0;white-space:nowrap;overflow:hidden">2025-12-01 11:26:37</td><td style="border-right:1px solid #e4e8f2;border-bottom:1px solid #e9ecf3;text-align:left;padding-left:10px;white-space:nowrap;overflow:hidden">Kassala-Port Sudan Highway, ...</td><td style="border-right:1px solid #e4e8f2;border-bottom:1px solid #e9ecf3;text-align:left;padding-left:10px;white-space:nowrap;overflow:hidden">Lock rope: Pull out; Lock State: Unlock; back cover: open</td></tr><tr style="height:35px;background:#fff"><td style="border-right:1px solid #e4e8f2;border-bottom:1px solid #e9ecf3;text-align:center;padding:0;white-space:nowrap;overflow:hidden">3</td><td style="border-right:1px solid #e4e8f2;border-bottom:1px solid #e9ecf3;text-align:center;padding:0;white-space:nowrap;overflow:hidden">2683</td><td style="border-right:1px solid #e4e8f2;border-bottom:1px solid #e9ecf3;text-align:center;padding:0;white-space:nowrap;overflow:hidden">8025202783</td><td style="border-right:1px solid #e4e8f2;border-bottom:1px solid #e9ecf3;text-align:center;padding:0;white-space:nowrap;overflow:hidden">Base station</td><td style="border-right:1px solid #e4e8f2;border-bottom:1px solid #e9ecf3;text-align:center;padding:0;white-space:nowrap;overflow:hidden">2025-12-01 11:26:21</td><td style="border-right:1px solid #e4e8f2;border-bottom:1px solid #e9ecf3;text-align:left;padding-left:10px;white-space:nowrap;overflow:hidden">Kassala-Port Sudan Highway, ...</td><td style="border-right:1px solid #e4e8f2;border-bottom:1px solid #e9ecf3;text-align:left;padding-left:10px;white-space:nowrap;overflow:hidden">Lock rope: Pull out; Lock State: Unlock; back cover: open</td></tr><tr style="height:35px;background:#fafafa"><td style="border-right:1px solid #e4e8f2;border-bottom:1px solid #e9ecf3;text-align:center;padding:0;white-space:nowrap;overflow:hidden">4</td><td style="border-right:1px solid #e4e8f2;border-bottom:1px solid #e9ecf3;text-align:center;padding:0;white-space:nowrap;overflow:hidden">255</td><td style="border-right:1px solid #e4e8f2;border-bottom:1px solid #e9ecf3;text-align:center;padding:0;white-space:nowrap;overflow:hidden">8025300054</td><td style="border-right:1px solid #e4e8f2;border-bottom:1px solid #e9ecf3;text-align:center;padding:0;white-space:nowrap;overflow:hidden">Base station</td><td style="border-right:1px solid #e4e8f2;border-bottom:1px solid #e9ecf3;text-align:center;padding:0;white-space:nowrap;overflow:hidden">2025-12-01 11:26:19</td><td style="border-right:1px solid #e4e8f2;border-bottom:1px solid #e9ecf3;text-align:left;padding-left:10px;white-space:nowrap;overflow:hidden">Kassala-Port Sudan Highway, ...</td><td style="border-right:1px solid #e4e8f2;border-bottom:1px solid #e9ecf3;text-align:left;padding-left:10px;white-space:nowrap;overflow:hidden">Lock rope: Pull out; Lock State: Unlock; back cover: open</td></tr><tr style="height:35px;background:#fff"><td style="border-right:1px solid #e4e8f2;border-bottom:1px solid #e9ecf3;text-align:center;padding:0;white-space:nowrap;overflow:hidden">5</td><td style="border-right:1px solid #e4e8f2;border-bottom:1px solid #e9ecf3;text-align:center;padding:0;white-space:nowrap;overflow:hidden">13632</td><td style="border-right:1px solid #e4e8f2;border-bottom:1px solid #e9ecf3;text-align:center;padding:0;white-space:nowrap;overflow:hidden">8025301017</td><td style="border-right:1px solid #e4e8f2;border-bottom:1px solid #e9ecf3;text-align:center;padding:0;white-space:nowrap;overflow:hidden">Base station</td><td style="border-right:1px solid #e4e8f2;border-bottom:1px solid #e9ecf3;text-align:center;padding:0;white-space:nowrap;overflow:hidden">2025-12-01 11:25:46</td><td style="border-right:1px solid #e4e8f2;border-bottom:1px solid #e9ecf3;text-align:left;padding-left:10px;white-space:nowrap;overflow:hidden">Qadarif-Kassala Highway, Kas...</td><td style="border-right:1px solid #e4e8f2;border-bottom:1px solid #e9ecf3;text-align:left;padding-left:10px;white-space:nowrap;overflow:hidden">Lock rope: Pull out; Lock State: Unlock; back cover: open</td></tr><tr style="height:35px;background:#fafafa"><td style="border-right:1px solid #e4e8f2;border-bottom:1px solid #e9ecf3;text-align:center;padding:0;white-space:nowrap;overflow:hidden">6</td><td style="border-right:1px solid #e4e8f2;border-bottom:1px solid #e9ecf3;text-align:center;padding:0;white-space:nowrap;overflow:hidden">58310</td><td style="border-right:1px solid #e4e8f2;border-bottom:1px solid #e9ecf3;text-align:center;padding:0;white-space:nowrap;overflow:hidden">8025300369</td><td style="border-right:1px solid #e4e8f2;border-bottom:1px solid #e9ecf3;text-align:center;padding:0;white-space:nowrap;overflow:hidden">Base station</td><td style="border-right:1px solid #e4e8f2;border-bottom:1px solid #e9ecf3;text-align:center;padding:0;white-space:nowrap;overflow:hidden">2025-12-01 11:25:39</td><td style="border-right:1px solid #e4e8f2;border-bottom:1px solid #e9ecf3;text-align:left;padding-left:10px;white-space:nowrap;overflow:hidden">Qadarif-Kassala Highway, Kas...</td><td style="border-right:1px solid #e4e8f2;border-bottom:1px solid #e9ecf3;text-align:left;padding-left:10px;white-space:nowrap;overflow:hidden">Lock rope: Pull out; Lock State: Unlock; back cover: open</td></tr><tr style="height:35px;background:#fff"><td style="border-right:1px solid #e4e8f2;border-bottom:1px solid #e9ecf3;text-align:center;padding:0;white-space:nowrap;overflow:hidden">7</td><td style="border-right:1px solid #e4e8f2;border-bottom:1px solid #e9ecf3;text-align:center;padding:0;white-space:nowrap;overflow:hidden">9049</td><td style="border-right:1px solid #e4e8f2;border-bottom:1px solid #e9ecf3;text-align:center;padding:0;white-space:nowrap;overflow:hidden">8025300145</td><td style="border-right:1px solid #e4e8f2;border-bottom:1px solid #e9ecf3;text-align:center;padding:0;white-space:nowrap;overflow:hidden">Base station</td><td style="border-right:1px solid #e4e8f2;border-bottom:1px solid #e9ecf3;text-align:center;padding:0;white-space:nowrap;overflow:hidden">2025-12-01 11:24:57</td><td style="border-right:1px solid #e4e8f2;border-bottom:1px solid #e9ecf3;text-align:left;padding-left:10px;white-space:nowrap;overflow:hidden">Kassala-Port Sudan Highway, ...</td><td style="border-right:1px solid #e4e8f2;border-bottom:1px solid #e9ecf3;text-align:left;padding-left:10px;white-space:nowrap;overflow:hidden">Lock rope: Pull out; Lock State: Unlock; back cover: open</td></tr><tr style="height:35px;background:#fafafa"><td style="border-right:1px solid #e4e8f2;border-bottom:1px solid #e9ecf3;text-align:center;padding:0;white-space:nowrap;overflow:hidden">8</td><td style="border-right:1px solid #e4e8f2;border-bottom:1px solid #e9ecf3;text-align:center;padding:0;white-space:nowrap;overflow:hidden">777777</td><td style="border-right:1px solid #e4e8f2;border-bottom:1px solid #e9ecf3;text-align:center;padding:0;white-space:nowrap;overflow:hidden">8025300346</td><td style="border-right:1px solid #e4e8f2;border-bottom:1px solid #e9ecf3;text-align:center;padding:0;white-space:nowrap;overflow:hidden">Base station</td><td style="border-right:1px solid #e4e8f2;border-bottom:1px solid #e9ecf3;text-align:center;padding:0;white-space:nowrap;overflow:hidden">2025-12-01 11:24:18</td><td style="border-right:1px solid #e4e8f2;border-bottom:1px solid #e9ecf3;text-align:left;padding-left:10px;white-space:nowrap;overflow:hidden">Qadarif-Kassala Highway, Kas...</td><td style="border-right:1px solid #e4e8f2;border-bottom:1px solid #e9ecf3;text-align:left;padding-left:10px;white-space:nowrap;overflow:hidden">Lock rope: Pull out; Lock State: Unlock; back cover: open</td></tr></table></div>
<div class="abs" style="left:25px;top:446px;width:1050px;height:13px;background:#e8edfa"></div>
<div class="abs" style="left:26px;top:446px;width:1000px;height:13px;background:#93a6f0"></div>
<svg class="abs" style="left:50px;top:474px" width="8" height="12" viewBox="0 0 8 12"><path d="M6.5 1 L1.5 6 L6.5 11" fill="none" stroke="#b8bcc4" stroke-width="1.3"/></svg>
<div class="abs" style="left:76px;top:467px;width:35px;height:28px;background:#74a7d8;color:#fff;font-weight:bold;font-size:13px;text-align:center;line-height:28px">1</div>
<svg class="abs" style="left:128px;top:474px" width="8" height="12" viewBox="0 0 8 12"><path d="M1.5 1 L6.5 6 L1.5 11" fill="none" stroke="#b8bcc4" stroke-width="1.3"/></svg>
<div class="abs" style="left:170px;top:474px;font-size:13px;color:#555">Go to</div>
<div class="abs" style="left:206px;top:467px;width:45px;height:29px;border:1px solid #dcdfe6;border-radius:3px;font-size:13px;color:#555;text-align:center;line-height:27px">1</div>
<div class="abs" style="left:267px;top:472px;font-size:13px;color:#555">Total 8</div>
<div class="abs" style="left:320px;top:467px;width:99px;height:29px;border:1px solid #dcdfe6;border-radius:3px;font-size:13px;color:#555;line-height:27px;padding-left:16px">50/page</div>
<svg class="abs" style="left:402px;top:479px" width="10" height="7" viewBox="0 0 10 7"><path d="M1 1 L5 5 L9 1" fill="none" stroke="#b8bcc4" stroke-width="1.2"/></svg>
</div>
<svg class="abs" style="left:0;top:0" width="1920" height="200" viewBox="0 0 1920 200"><path d="M459 113.6 L853.5 151.5 L854 140.6 L899.5 163.9 L850 176.7 L850.5 165.8 L459 115.2Z" fill="#f24b4b"/></svg>

<!--DIALOG-->
<div class="abs" style="left:1554px;top:93px;width:351px;height:568px;background:#fff"></div><div class="abs" style="left:1905px;top:93px;width:15px;height:568px;background:#e8ecfa"></div><div class="abs" style="left:1905px;top:94px;width:15px;height:422px;background:#93a6ef"></div><div class="abs" style="left:1514px;top:94px;width:40px;height:40px;background:#d6d6d6;border-radius:3px 0 0 0"></div><svg class="abs" style="left:1525px;top:105px" width="18" height="18" viewBox="0 0 18 18"><rect x="1" y="1" width="6" height="6" fill="none" stroke="#5a5a5a" stroke-width="1.5"/><rect x="1" y="10.5" width="6" height="6" fill="none" stroke="#5a5a5a" stroke-width="1.5"/><path d="M9.5 2 H17 M9.5 6 H17 M9.5 11.5 H17 M9.5 15.5 H17" stroke="#5a5a5a" stroke-width="1.6"/></svg><div class="abs" style="left:1514px;top:135px;width:40px;height:40px;background:#5c7cec;border-radius:0 0 0 6px"></div><svg class="abs" style="left:1525px;top:146px" width="18" height="19" viewBox="0 0 18 19"><path d="M2 2 Q2 1 3 1 H15 Q16 1 16 2 V17.5 L9 13 L2 17.5Z" fill="none" stroke="#fff" stroke-width="1.4"/><path d="M5 5.5 H13 M5 8.5 H13" stroke="#fff" stroke-width="1.4"/></svg><div class="abs" style="left:1554px;top:94px;width:351px;height:40px;background:linear-gradient(to right,#3868cf 0%,#4a80d8 25%,#7eaae0 50%,#a9c8ec 70%,#e6f0fa 100%);border-radius:3px 0 0 3px"></div><svg class="abs" style="left:1559px;top:106px" width="16" height="16" viewBox="0 0 16 16"><circle cx="8" cy="8" r="7.4" fill="#ececec"/><path d="M4.6 4.8 L8 8 L11.4 4.8 M4.6 8.4 L8 11.6 L11.4 8.4" fill="none" stroke="#3c6cd0" stroke-width="1.3"/></svg><div class="abs" style="left:1580px;top:106px;font-size:14px;font-weight:bold;color:#fff">Asset info.</div><svg class="abs" style="left:1555px;top:150px" width="110" height="72" viewBox="0 0 1392 911">
<ellipse cx="215" cy="775" rx="62" ry="35" fill="#111"/>
<ellipse cx="730" cy="712" rx="55" ry="32" fill="#111"/>
<path d="M690 100 L1295 215 L1295 575 L690 600Z" fill="#4f7fd6"/>
<path d="M255 145 L690 100 L700 600 L470 645 L470 300 L85 295 Q160 220 260 200Z" fill="#3a5fc4"/>
<path d="M600 110 L690 100 L700 600 L640 600Z" fill="#2f55b5"/>
<path d="M340 275 Q450 190 570 150 Q615 150 625 275Z" fill="#62a5f5"/>
<path d="M90 290 H470 L480 645 H60 Q55 450 90 290Z" fill="#3f6fd6"/>
<path d="M470 295 L640 290 L650 600 L480 650Z" fill="#3459c2"/>
<rect x="80" y="308" width="375" height="172" rx="18" fill="#333"/>
<rect x="495" y="330" width="125" height="140" rx="14" fill="#333"/>
<rect x="95" y="505" width="285" height="135" rx="20" fill="#5b9aee"/>
<rect x="130" y="533" width="215" height="82" rx="22" fill="#333"/>
<path d="M55 650 H470 L465 760 Q250 780 60 745Z" fill="#3f6fd6"/>
<path d="M120 680 H345 Q340 735 230 738 Q125 735 120 680Z" fill="#333"/>
<rect x="62" y="668" width="40" height="68" rx="8" fill="#555"/>
<rect x="368" y="688" width="88" height="68" rx="10" fill="#555"/>
<path d="M640 600 L1250 580 L1250 680 L650 718Z" fill="#232323"/>
<path d="M1245 605 H1280 V625 H1245Z M1245 648 H1290 V668 H1245Z" fill="#333"/>
<ellipse cx="580" cy="740" rx="78" ry="105" fill="#111"/>
<ellipse cx="585" cy="740" rx="34" ry="50" fill="#666"/>
<ellipse cx="1175" cy="665" rx="62" ry="85" fill="#111"/>
<ellipse cx="1185" cy="660" rx="28" ry="40" fill="#666"/>
</svg><div class="abs" style="left:1668px;top:179px;font-size:14px;font-weight:bold;color:#000">25814 [8025300335]</div><div class="abs" style="left:1559px;top:237px;width:341px;height:195px;background:#fff;border-radius:4px;box-shadow:0 0 4px rgba(0,0,0,.35)"></div><div class="abs" style="left:1594px;top:270px;width:296px;height:1px;background:#e3e3e3"></div><div class="abs" style="left:1594px;top:299px;width:296px;height:1px;background:#e3e3e3"></div><div class="abs" style="left:1594px;top:328px;width:296px;height:1px;background:#e3e3e3"></div><div class="abs" style="left:1594px;top:357px;width:296px;height:1px;background:#e3e3e3"></div><div class="abs" style="left:1594px;top:386px;width:296px;height:1px;background:#e3e3e3"></div><div class="abs" style="left:1590px;top:250px;width:72px;text-align:right;font-size:12px;font-weight:bold;color:#333;line-height:13px">Driver info.:</div><div class="abs" style="left:1670px;top:250px;font-size:12px;color:#111;line-height:14px">--</div><div class="abs" style="left:1590px;top:273px;width:72px;text-align:right;font-size:12px;font-weight:bold;color:#333;line-height:13px">Form<br>Number:</div><div class="abs" style="left:1670px;top:279px;font-size:12px;color:#111;line-height:14px">35648</div><div class="abs" style="left:1590px;top:308px;width:72px;text-align:right;font-size:12px;font-weight:bold;color:#333;line-height:13px">Route info:</div><div class="abs" style="left:1670px;top:308px;font-size:12px;color:#111;line-height:14px;text-decoration:underline">PZUSDGDR00(35648)</div><div class="abs" style="left:1590px;top:337px;width:72px;text-align:right;font-size:12px;font-weight:bold;color:#333;line-height:13px">GPS time:</div><div class="abs" style="left:1670px;top:337px;font-size:12px;color:#111;line-height:14px">2025-12-01 12:23:47</div><div class="abs" style="left:1590px;top:366px;width:72px;text-align:right;font-size:12px;font-weight:bold;color:#333;line-height:13px">Run status:</div><div class="abs" style="left:1670px;top:366px;font-size:12px;color:#111;line-height:14px">Driving【1 min】</div><div class="abs" style="left:1590px;top:401px;width:72px;text-align:right;font-size:12px;font-weight:bold;color:#333;line-height:13px">Addr.:</div><div class="abs" style="left:1670px;top:388px;width:219px;font-size:12px;color:#111;line-height:20px;word-break:break-all">Qadarif-Kassala Highway, Kassala, Kassala State, Sudan</div><svg class="abs" style="left:1569px;top:247px" width="18" height="18" viewBox="0 0 18 18"><circle cx="9" cy="5" r="4.2" fill="#3a55c8"/><path d="M1 16.5 Q1 10.5 9 10.5 Q17 10.5 17 16.5 Q17 17.5 16 17.5 H2 Q1 17.5 1 16.5Z" fill="#3a55c8"/></svg><svg class="abs" style="left:1569px;top:276px" width="18" height="18" viewBox="0 0 18 18"><path d="M4.5 14 V3 Q4.5 1.5 6 1.5 H15 Q16.5 1.5 16.5 3 V13 Q16.5 14.5 15 14.5" fill="none" stroke="#3a55c8" stroke-width="1.5"/><path d="M7.5 5 H13 M7.5 8 H13 M7.5 11 H10" stroke="#3a55c8" stroke-width="1.3"/><path d="M1.5 14 Q1.5 11.5 4 11.5 H13 Q15 11.5 15 14 Q15 16.5 13 16.5 H4 Q1.5 16.5 1.5 14Z" fill="none" stroke="#3a55c8" stroke-width="1.5"/></svg><svg class="abs" style="left:1568px;top:305px" width="20" height="19" viewBox="0 0 20 19"><path d="M5 18 Q1 13 1 10 A4 4 0 0 1 9 10 Q9 13 5 18Z" fill="#3a55c8"/><circle cx="5" cy="10" r="1.4" fill="#fff"/><circle cx="16" cy="3.5" r="2.6" fill="none" stroke="#3a55c8" stroke-width="1.4"/><path d="M15.5 7 Q14 12 11 14 Q9 15.5 7 17" fill="none" stroke="#3a55c8" stroke-width="1.2" stroke-dasharray="1.5 1.5"/></svg><svg class="abs" style="left:1569px;top:334px" width="18" height="18" viewBox="0 0 18 18"><circle cx="9" cy="9" r="7.6" fill="none" stroke="#3a55c8" stroke-width="1.8"/><path d="M8.5 4 V9.5 H13" fill="none" stroke="#3a55c8" stroke-width="1.8"/></svg><svg class="abs" style="left:1569px;top:363px" width="18" height="18" viewBox="0 0 18 18"><circle cx="9" cy="9" r="7.5" fill="none" stroke="#3a55c8" stroke-width="1.8" stroke-dasharray="10 1.8"/><circle cx="9" cy="9" r="3.8" fill="none" stroke="#3a55c8" stroke-width="1.8"/></svg><svg class="abs" style="left:1570px;top:398px" width="17" height="19" viewBox="0 0 17 19"><path d="M8.5 18.5 Q1 11 1 7.5 A7.5 7.5 0 0 1 16 7.5 Q16 11 8.5 18.5Z" fill="#3a55c8"/><circle cx="8.5" cy="7.5" r="2.6" fill="#fff"/></svg><div class="abs" style="left:1554px;top:442px;width:351px;height:40px;background:linear-gradient(to right,#3868cf 0%,#4a80d8 25%,#7eaae0 50%,#a9c8ec 70%,#e6f0fa 100%);border-radius:3px 0 0 3px"></div><svg class="abs" style="left:1559px;top:454px" width="16" height="16" viewBox="0 0 16 16"><circle cx="8" cy="8" r="7.4" fill="#ececec"/><path d="M4.6 4.8 L8 8 L11.4 4.8 M4.6 8.4 L8 11.6 L11.4 8.4" fill="none" stroke="#3c6cd0" stroke-width="1.3"/></svg><div class="abs" style="left:1580px;top:454px;font-size:14px;font-weight:bold;color:#fff">Status</div><svg class="abs" style="left:1555px;top:480px" width="350" height="132" viewBox="0 0 1920 724">
<defs><linearGradient id="gb" x1="0" y1="0" x2="0" y2="1"><stop offset="0" stop-color="#00cc33"/><stop offset="1" stop-color="#00873d"/></linearGradient>
<linearGradient id="bat" x1="0" y1="0" x2="1" y2="0"><stop offset="0" stop-color="#111"/><stop offset="0.3" stop-color="#666"/><stop offset="0.5" stop-color="#eee"/><stop offset="0.7" stop-color="#666"/><stop offset="1" stop-color="#111"/></linearGradient></defs>
<rect x="643" y="30" width="6" height="675" fill="#d8d8d8"/><rect x="1268" y="30" width="6" height="675" fill="#d8d8d8"/>
<rect x="22" y="706" width="1868" height="6" fill="#d8d8d8"/>
<g fill="url(#gb)"><rect x="297" y="290" width="43" height="50"/><rect x="362" y="242" width="43" height="98"/><rect x="428" y="192" width="43" height="148"/><rect x="494" y="143" width="43" height="197"/>
<rect x="297" y="565" width="43" height="47"/><rect x="362" y="516" width="43" height="96"/><rect x="428" y="466" width="43" height="146"/><rect x="494" y="417" width="43" height="195"/></g>
<g fill="#3a55c8"><g transform="rotate(42 180 268)"><rect x="104" y="252" width="62" height="34" rx="2"/><rect x="170" y="244" width="20" height="50" rx="2"/><rect x="194" y="252" width="62" height="34" rx="2"/></g><path d="M150 282 Q128 300 140 318 Q155 330 172 312Z"/></g><g fill="none" stroke="#3a55c8" stroke-width="8" stroke-linecap="round"><path d="M112 300 Q112 335 148 338"/><path d="M128 304 Q130 322 146 323"/></g>
<g fill="none" stroke="#3a55c8" stroke-width="12"><path d="M128 505 Q95 545 128 585"/><path d="M158 520 Q138 545 158 570"/><path d="M222 505 Q255 545 222 585"/><path d="M192 520 Q212 545 192 570"/></g>
<circle cx="175" cy="540" r="14" fill="#3a55c8"/><rect x="169" y="540" width="12" height="72" fill="#3a55c8"/>
<path d="M828 290 V220 Q828 120 958 120 Q1088 120 1088 220 V290 H1043 V225 Q1043 168 958 168 Q873 168 873 225 V290Z" fill="#7f8ff0"/>
<path d="M958 120 Q1088 120 1088 220 V290 H1043 V225 Q1043 168 958 168Z" fill="#5f6dd0"/>
<path d="M815 290 H965 V557 H815 Q790 557 790 532 V315 Q790 290 815 290Z" fill="#7f8ff0"/>
<path d="M965 290 H1110 Q1135 290 1135 315 V532 Q1135 557 1110 557 H965Z" fill="#5f6dd0"/>
<rect x="815" y="355" width="20" height="95" rx="10" fill="#97a6f4"/><rect x="815" y="465" width="20" height="40" rx="10" fill="#97a6f4"/>
<circle cx="958" cy="395" r="38" fill="#fff"/><rect x="940" y="400" width="40" height="92" fill="#fff"/>
<rect x="1487" y="150" width="190" height="400" rx="14" fill="#fff" stroke="#222" stroke-width="10"/>
<rect x="1492" y="220" width="180" height="315" fill="#80c864"/>
<rect x="1487" y="150" width="190" height="30" rx="10" fill="url(#bat)"/><rect x="1530" y="130" width="100" height="25" rx="8" fill="url(#bat)"/>
<rect x="1487" y="530" width="190" height="27" rx="10" fill="url(#bat)"/>
</svg>
<div class="abs" style="left:1559px;top:484px;width:113px;text-align:center;font-size:12px;font-weight:bold;color:#333">Signal</div>
<div class="abs" style="left:1673px;top:484px;width:113px;text-align:center;font-size:12px;font-weight:bold;color:#333;word-spacing:1px">Lock State</div>
<div class="abs" style="left:1787px;top:484px;width:113px;text-align:center;font-size:12px;font-weight:bold;color:#333">Battery</div>
<div class="abs" style="left:1813px;top:535px;width:60px;text-align:center;font-size:12px;font-weight:bold;color:#333">87%</div>
<div class="abs" style="left:1675px;top:591px;font-size:12px;color:#333">Lock posture:</div>
<div class="abs" style="left:1755px;top:591px;font-size:12px;font-weight:bold;color:#4a2aa8">None</div>
<div class="abs" style="left:1753px;top:610px;width:1px;height:51px;background:#d8d8d8"></div>
<div class="abs" style="left:1559px;top:610px;width:194px;text-align:center;font-size:14px;color:#111">Speed</div>
<div class="abs" style="left:1754px;top:610px;width:146px;text-align:center;font-size:14px;color:#111">Direction</div>
<svg class="abs" style="left:1555px;top:600px" width="350" height="61" viewBox="0 0 1893 330">
<circle cx="548" cy="450" r="290" fill="#fff" stroke="#e98f28" stroke-width="9"/>
<circle cx="548" cy="450" r="212" fill="none" stroke="#e98f28" stroke-width="66"/>
<g stroke="#e98f28" stroke-width="7"><path d="M548 160 V205 M533 160 V205 M563 160 V205"/><path d="M450 178 L462 205 M360 212 L382 240 M290 262 L320 285 M646 178 L634 205 M736 212 L714 240 M806 262 L776 285" /></g>
<text x="522" y="250" font-family="Liberation Serif" font-size="34" fill="#333">80</text>
<text x="405" y="280" font-family="Liberation Serif" font-size="34" fill="#333" transform="rotate(-28 425 268)">60</text>
<text x="640" y="282" font-family="Liberation Serif" font-size="34" fill="#333" transform="rotate(28 670 268)">100</text>
<circle cx="1470" cy="410" r="216" fill="none" stroke="#77c3d5" stroke-width="72"/>
<circle cx="1470" cy="410" r="167" fill="none" stroke="#c9f0fa" stroke-width="27"/>
<text x="1450" y="212" font-family="Liberation Serif" font-size="46" font-weight="bold" fill="#333">N</text>
</svg>

<!--RIGHT-->
<div class="abs" style="left:198px;top:661px;width:1722px;height:36px;background:#fff"></div><div class="abs" style="left:198px;top:661px;width:1722px;height:35px;background:#5b78ec"></div><div class="abs" style="left:198px;top:661px;width:80px;height:35px;background:#7b93f0;border-bottom:3px solid #f5a623"></div><div class="abs" style="left:206px;top:669px;width:15px;height:15px;border-radius:3px;background:#fff"></div><div class="abs" style="left:213px;top:664px;width:35px;height:14px;background:#f26b2e;border-radius:3px;color:#fff;font-size:11.5px;line-height:14px;text-align:center">1006</div><div class="abs" style="left:255px;top:671px;font-size:12px;font-weight:bold;color:#fff">All</div><div class="abs" style="left:286px;top:670px;width:15px;height:15px;border-radius:3px;background:linear-gradient(#5fd35a,#119a1a)"></div><div class="abs" style="left:293px;top:665px;width:28px;height:14px;background:#f26b2e;border-radius:3px;color:#fff;font-size:11.5px;line-height:14px;text-align:center">137</div><div class="abs" style="left:329px;top:671px;font-size:12px;font-weight:bold;color:#fff">Motion</div><div class="abs" style="left:384px;top:670px;width:15px;height:15px;border-radius:3px;background:linear-gradient(#d9f27a,#8ed22a)"></div><div class="abs" style="left:391px;top:665px;width:15px;height:14px;background:#f26b2e;border-radius:3px;color:#fff;font-size:11.5px;line-height:14px;text-align:center">0</div><div class="abs" style="left:414px;top:671px;font-size:12px;font-weight:bold;color:#fff">Idling</div><div class="abs" style="left:461px;top:670px;width:15px;height:15px;border-radius:3px;background:linear-gradient(#f5b445,#d98a1c)"></div><div class="abs" style="left:468px;top:665px;width:28px;height:14px;background:#f26b2e;border-radius:3px;color:#fff;font-size:11.5px;line-height:14px;text-align:center">500</div><div class="abs" style="left:504px;top:671px;font-size:12px;font-weight:bold;color:#fff">Stationary</div><div class="abs" style="left:579px;top:670px;width:15px;height:15px;border-radius:3px;background:linear-gradient(#6fd0ff,#2f9ae8)"></div><div class="abs" style="left:586px;top:665px;width:14px;height:14px;background:#f26b2e;border-radius:3px;color:#fff;font-size:11.5px;line-height:14px;text-align:center">9</div><div class="abs" style="left:608px;top:671px;font-size:12px;font-weight:bold;color:#fff">Not positioned</div><svg class="abs" style="left:703px;top:668px" width="18" height="19" viewBox="0 0 18 19"><path d="M3 8 V5 A4 4 0 0 1 11 5 V6" fill="none" stroke="#16c83c" stroke-width="2.2"/><rect x="3" y="9" width="14" height="9" rx="1.5" fill="#16c83c"/></svg><div class="abs" style="left:714px;top:665px;width:28px;height:14px;background:#f26b2e;border-radius:3px;color:#fff;font-size:11.5px;line-height:14px;text-align:center">619</div><div class="abs" style="left:750px;top:671px;font-size:12px;font-weight:bold;color:#fff">Unlock</div><svg class="abs" style="left:804px;top:668px" width="16" height="19" viewBox="0 0 16 19"><path d="M4 9 V6 A4 4 0 0 1 12 6 V9" fill="none" stroke="#fff" stroke-width="2"/><rect x="2" y="9" width="12" height="9" rx="1.5" fill="#fff"/><rect x="7" y="12" width="2" height="3" fill="#5b78ec"/></svg><div class="abs" style="left:813px;top:665px;width:22px;height:14px;background:#f26b2e;border-radius:3px;color:#fff;font-size:11.5px;line-height:14px;text-align:center">27</div><div class="abs" style="left:842px;top:671px;font-size:12px;font-weight:bold;color:#fff">Lock</div><div class="abs" style="left:886px;top:670px;width:15px;height:15px;border-radius:3px;background:linear-gradient(#666,#333)"></div><div class="abs" style="left:893px;top:665px;width:15px;height:14px;background:#f26b2e;border-radius:3px;color:#fff;font-size:11.5px;line-height:14px;text-align:center">0</div><div class="abs" style="left:916px;top:671px;font-size:12px;font-weight:bold;color:#fff">Offline</div><div class="abs" style="left:969px;top:670px;width:15px;height:15px;border-radius:3px;background:linear-gradient(#bbb,#888)"></div><div class="abs" style="left:976px;top:665px;width:28px;height:14px;background:#f26b2e;border-radius:3px;color:#fff;font-size:11.5px;line-height:14px;text-align:center">360</div><div class="abs" style="left:1012px;top:671px;font-size:12px;font-weight:bold;color:#fff">Inactivated</div><svg class="abs" style="left:1090px;top:670px" width="17" height="17" viewBox="0 0 17 17"><circle cx="8.5" cy="8.5" r="7.4" fill="none" stroke="#fff" stroke-width="1.4"/><circle cx="9" cy="4.8" r="1.1" fill="#fff"/><path d="M9 7.2 L7.6 13" stroke="#fff" stroke-width="1.6"/></svg><svg class="abs" style="left:1120px;top:671px" width="15" height="15" viewBox="0 0 15 15"><circle cx="6" cy="6" r="4.5" fill="none" stroke="#fff" stroke-width="2"/><path d="M9.5 9.5 L13.5 13.5" stroke="#fff" stroke-width="2.4" stroke-linecap="round"/></svg><div class="abs" style="left:1144px;top:666px;width:150px;height:24px;background:#fff;border-radius:3px;font-size:13px;color:#777;line-height:24px;padding-left:10px">Enter the keywords</div><svg class="abs" style="left:1651px;top:670px" width="17" height="17" viewBox="0 0 17 17"><circle cx="13" cy="3.5" r="2.8" fill="#fff"/><circle cx="3.5" cy="8.5" r="2.8" fill="#fff"/><circle cx="13" cy="13.5" r="2.8" fill="#fff"/><path d="M3.5 8.5 L13 3.5 M3.5 8.5 L13 13.5" stroke="#fff" stroke-width="1.6"/></svg><svg class="abs" style="left:1692px;top:670px" width="17" height="17" viewBox="0 0 17 17"><path d="M4 1.5 H13 Q13.5 1.5 13.5 2.2 Q13.5 6 8.5 8.5 Q3.5 6 3.5 2.2 Q3.5 1.5 4 1.5Z M8.5 8.5 Q13.5 11 13.5 14.8 Q13.5 15.5 13 15.5 H4 Q3.5 15.5 3.5 14.8 Q3.5 11 8.5 8.5Z" fill="none" stroke="#fff" stroke-width="1.6" stroke-linejoin="round"/><path d="M6 14 L8.5 11.5 L11 14Z" fill="#fff"/></svg><svg class="abs" style="left:1731px;top:670px" width="17" height="17" viewBox="0 0 17 17"><path d="M7 2 H2 V15.5 H15.5 V9" fill="none" stroke="#fff" stroke-width="1.6"/><path d="M6.5 11 Q7 6 12 5 V2.5 L15.5 5.8 L12 9 V7 Q9 7 6.5 11Z" fill="#fff"/></svg><svg class="abs" style="left:1772px;top:670px" width="17" height="17" viewBox="0 0 17 17"><path d="M15.56 7.10 L15.70 8.50 L13.99 9.59 L13.67 10.64 L14.49 12.50 L13.59 13.59 L11.61 13.16 L10.64 13.67 L9.90 15.56 L8.50 15.70 L7.41 13.99 L6.36 13.67 L4.50 14.49 L3.41 13.59 L3.84 11.61 L3.33 10.64 L1.44 9.90 L1.30 8.50 L3.01 7.41 L3.33 6.36 L2.51 4.50 L3.41 3.41 L5.39 3.84 L6.36 3.33 L7.10 1.44 L8.50 1.30 L9.59 3.01 L10.64 3.33 L12.50 2.51 L13.59 3.41 L13.16 5.39 L13.67 6.36Z" fill="none" stroke="#fff" stroke-width="1.5" stroke-linejoin="round"/><circle cx="8.5" cy="8.5" r="2.4" fill="none" stroke="#fff" stroke-width="1.5"/></svg><svg class="abs" style="left:1813px;top:670px" width="17" height="17" viewBox="0 0 17 17"><rect x="5" y="1.5" width="10.5" height="10.5" rx="2.5" fill="none" stroke="#fff" stroke-width="1.6"/><path d="M2 5.5 V12.5 Q2 15 4.5 15 H11.5" fill="none" stroke="#fff" stroke-width="1.6"/><rect x="5" y="5" width="7" height="7" rx="1.5" fill="none" stroke="#fff" stroke-width="1.6"/></svg><svg class="abs" style="left:1850px;top:670px" width="17" height="17" viewBox="0 0 17 17"><path d="M1.5 6 V1.5 H6 M11 1.5 H15.5 V6 M15.5 11 V15.5 H11 M6 15.5 H1.5 V11" fill="none" stroke="#fff" stroke-width="2"/></svg><svg class="abs" style="left:1889px;top:670px" width="17" height="17" viewBox="0 0 17 17"><path d="M1 8.5 H16" stroke="#fff" stroke-width="2.4"/></svg><div class="abs" style="left:199px;top:697px;width:1707px;height:200px;overflow:hidden"><table style="border-collapse:collapse;table-layout:fixed;width:1735px;font-size:12px;color:#555"><colgroup><col style="width:59px"><col style="width:140px"><col style="width:140px"><col style="width:140px"><col style="width:120px"><col style="width:70px"><col style="width:160px"><col style="width:160px"><col style="width:100px"><col style="width:100px"><col style="width:150px"><col style="width:180px"><col style="width:160px"><col style="width:56px"></colgroup><tr style="height:34px;background:#c5ddf8"><th style="padding:0;border-right:1px solid #e4e8f2;font-weight:bold;color:#303848;white-space:nowrap"><div style="display:flex;align-items:center;justify-content:center">Index</div></th><th style="padding:0;border-right:1px solid #e4e8f2;font-weight:bold;color:#303848;white-space:nowrap"><div style="display:flex;align-items:center;justify-content:center">Company<svg width="14" height="12" viewBox="0 0 14 12" style="margin-left:6px;flex:none"><path d="M4.5 0.5 L8.5 5 H0.5Z M4.5 11.5 L8.5 7 H0.5Z" fill="#8a8f99"/></svg></div></th><th style="padding:0;border-right:1px solid #e4e8f2;font-weight:bold;color:#303848;white-space:nowrap"><div style="display:flex;align-items:center;justify-content:center"><svg width="17" height="17" viewBox="0 0 17 17" style="flex:none;margin-right:3px"><path d="M2 9 L4 4 Q4.6 2.8 6 2.8 H11 Q12.4 2.8 13 4 L15 9 Q16.5 9.5 16.5 11 V14 H14.5 V15.5 H12.5 V14 H4.5 V15.5 H2.5 V14 H0.5 V11 Q0.5 9.5 2 9Z" fill="#3a55c8"/><path d="M4 8.5 L5.2 4.8 H11.8 L13 8.5Z" fill="#c5ddf8"/><circle cx="3.5" cy="11.3" r="1.2" fill="#c5ddf8"/><circle cx="13.5" cy="11.3" r="1.2" fill="#c5ddf8"/></svg>Asset Name<svg width="14" height="12" viewBox="0 0 14 12" style="margin-left:6px;flex:none"><path d="M4.5 0.5 L8.5 5 H0.5Z M4.5 11.5 L8.5 7 H0.5Z" fill="#8a8f99"/></svg></div></th><th style="padding:0;border-right:1px solid #e4e8f2;font-weight:bold;color:#303848;white-space:nowrap"><div style="display:flex;align-items:center;justify-content:center"><svg width="17" height="17" viewBox="0 0 17 17" style="flex:none;margin-right:3px"><rect x="0.5" y="2" width="2" height="13" fill="#3a55c8"/><rect x="4" y="2" width="1.5" height="13" fill="#3a55c8"/><rect x="7" y="2" width="2.5" height="13" fill="#3a55c8"/><rect x="11" y="2" width="1.5" height="13" fill="#3a55c8"/><rect x="14" y="2" width="2.5" height="13" fill="#3a55c8"/></svg>Device ID<svg width="14" height="12" viewBox="0 0 14 12" style="margin-left:6px;flex:none"><path d="M4.5 0.5 L8.5 5 H0.5Z M4.5 11.5 L8.5 7 H0.5Z" fill="#8a8f99"/></svg></div></th><th style="padding:0;border-right:1px solid #e4e8f2;font-weight:bold;color:#303848;white-space:nowrap"><div style="display:flex;align-items:center;justify-content:center"><svg width="17" height="17" viewBox="0 0 17 17" style="flex:none;margin-right:3px"><rect x="2.5" y="1" width="12" height="15" rx="1.5" fill="#3a55c8"/><rect x="4.5" y="3" width="8" height="10" fill="#6f8be0"/><rect x="4.5" y="3" width="8" height="10" fill="#3a55c8"/><path d="M5 14.5 H12" stroke="#c5ddf8" stroke-width="1"/></svg>D-Type<svg width="14" height="12" viewBox="0 0 14 12" style="margin-left:6px;flex:none"><path d="M4.5 0.5 L8.5 5 H0.5Z M4.5 11.5 L8.5 7 H0.5Z" fill="#8a8f99"/></svg></div></th><th style="padding:0;border-right:1px solid #e4e8f2;font-weight:bold;color:#303848;white-space:nowrap"><div style="display:flex;align-items:center;justify-content:center"><svg width="17" height="17" viewBox="0 0 17 17" style="flex:none;margin-right:3px"><circle cx="8.5" cy="8.5" r="7.2" fill="none" stroke="#3a55c8" stroke-width="1.5"/><circle cx="8.5" cy="8.5" r="3.6" fill="#3a55c8"/></svg><svg width="14" height="12" viewBox="0 0 14 12" style="margin-left:6px;flex:none"><path d="M4.5 0.5 L8.5 5 H0.5Z M4.5 11.5 L8.5 7 H0.5Z" fill="#8a8f99"/></svg></div></th><th style="padding:0;border-right:1px solid #e4e8f2;font-weight:bold;color:#303848;white-space:nowrap"><div style="display:flex;align-items:center;justify-content:center"><svg width="17" height="17" viewBox="0 0 17 17" style="flex:none;margin-right:3px"><circle cx="8.5" cy="8.5" r="5.5" fill="none" stroke="#3a55c8" stroke-width="1.6"/><path d="M8.5 0.5 V4.5 M8.5 12.5 V16.5 M0.5 8.5 H4.5 M12.5 8.5 H16.5" stroke="#3a55c8" stroke-width="1.6"/><circle cx="8.5" cy="8.5" r="1.6" fill="#3a55c8"/></svg><svg width="14" height="12" viewBox="0 0 14 12" style="margin-left:6px;flex:none"><path d="M4.5 0.5 L8.5 5 H0.5Z M4.5 11.5 L8.5 7 H0.5Z" fill="#8a8f99"/></svg></div></th><th style="padding:0;border-right:1px solid #e4e8f2;font-weight:bold;color:#303848;white-space:nowrap"><div style="display:flex;align-items:center;justify-content:center"><svg width="17" height="17" viewBox="0 0 17 17" style="flex:none;margin-right:3px"><path d="M3.5 10 A6.2 6.2 0 1 1 13.5 10" fill="none" stroke="#3a55c8" stroke-width="1.5"/><path d="M5.8 8.5 A3 3 0 1 1 11.2 8.5" fill="none" stroke="#3a55c8" stroke-width="1.5"/><circle cx="8.5" cy="7" r="1.5" fill="#3a55c8"/><path d="M8.5 8 L4.5 16.5 H12.5Z" fill="#3a55c8"/></svg><svg width="14" height="12" viewBox="0 0 14 12" style="margin-left:6px;flex:none"><path d="M4.5 0.5 L8.5 5 H0.5Z M4.5 11.5 L8.5 7 H0.5Z" fill="#8a8f99"/></svg></div></th><th style="padding:0;border-right:1px solid #e4e8f2;font-weight:bold;color:#303848;white-space:nowrap"><div style="display:flex;align-items:center;justify-content:center"><svg width="17" height="17" viewBox="0 0 17 17" style="flex:none;margin-right:3px"><path d="M6 2.3 A6.8 6.8 0 1 0 11 2.3" fill="none" stroke="#3a55c8" stroke-width="1.7"/><path d="M8.5 9.2 L5.5 5.5" stroke="#3a55c8" stroke-width="1.7"/><path d="M7.5 1.5 H9.5" stroke="#3a55c8" stroke-width="1.7"/></svg><svg width="14" height="12" viewBox="0 0 14 12" style="margin-left:6px;flex:none"><path d="M4.5 0.5 L8.5 5 H0.5Z M4.5 11.5 L8.5 7 H0.5Z" fill="#8a8f99"/></svg></div></th><th style="padding:0;border-right:1px solid #e4e8f2;font-weight:bold;color:#303848;white-space:nowrap"><div style="display:flex;align-items:center;justify-content:center"><svg width="17" height="17" viewBox="0 0 17 17" style="flex:none;margin-right:3px"><path d="M8.5 11 Q4.5 7 4.5 5 A4 4 0 0 1 12.5 5 Q12.5 7 8.5 11Z" fill="#3a55c8"/><circle cx="8.5" cy="5" r="1.5" fill="#c5ddf8"/><path d="M3 12.5 Q1 14.5 5 15.3 H13 Q15.5 14.8 13.5 13" fill="none" stroke="#3a55c8" stroke-width="1.4"/></svg><svg width="14" height="12" viewBox="0 0 14 12" style="margin-left:6px;flex:none"><path d="M4.5 0.5 L8.5 5 H0.5Z M4.5 11.5 L8.5 7 H0.5Z" fill="#8a8f99"/></svg></div></th><th style="padding:0;border-right:1px solid #e4e8f2;font-weight:bold;color:#303848;white-space:nowrap"><div style="display:flex;align-items:center;justify-content:center"><svg width="17" height="17" viewBox="0 0 17 17" style="flex:none;margin-right:3px"><rect x="1" y="4.5" width="13" height="8.5" rx="1" fill="none" stroke="#3a55c8" stroke-width="1.6"/><rect x="3" y="6.5" width="7.5" height="4.5" fill="#3a55c8"/><rect x="14.5" y="7" width="2" height="3.5" fill="#3a55c8"/></svg><svg width="14" height="12" viewBox="0 0 14 12" style="margin-left:6px;flex:none"><path d="M4.5 0.5 L8.5 5 H0.5Z M4.5 11.5 L8.5 7 H0.5Z" fill="#8a8f99"/></svg></div></th><th style="padding:0;border-right:1px solid #e4e8f2;font-weight:bold;color:#303848;white-space:nowrap"><div style="display:flex;align-items:center;justify-content:center"><svg width="17" height="17" viewBox="0 0 17 17" style="flex:none;margin-right:3px"><path d="M8.5 16.5 Q2.5 9.5 2.5 6.5 A6 6 0 0 1 14.5 6.5 Q14.5 9.5 8.5 16.5Z" fill="#3a55c8"/><circle cx="8.5" cy="6.5" r="2.3" fill="#c5ddf8"/></svg></div></th><th style="padding:0;border-right:1px solid #e4e8f2;font-weight:bold;color:#303848;white-space:nowrap"><div style="display:flex;align-items:center;justify-content:center"><svg width="17" height="17" viewBox="0 0 17 17" style="flex:none;margin-right:3px"><path d="M0.5 10 H16.5 M8.5 1 V16.5" stroke="#3a55c8" stroke-width="1.5"/><circle cx="8.5" cy="10" r="3" fill="#c5ddf8" stroke="#3a55c8" stroke-width="1.6"/></svg><svg width="14" height="12" viewBox="0 0 14 12" style="margin-left:6px;flex:none"><path d="M4.5 0.5 L8.5 5 H0.5Z M4.5 11.5 L8.5 7 H0.5Z" fill="#8a8f99"/></svg></div></th><th style="padding:0;border-right:1px solid #e4e8f2;font-weight:bold;color:#303848;white-space:nowrap"><div style="display:flex;align-items:center;justify-content:center"><svg width="17" height="17" viewBox="0 0 17 17" style="flex:none;margin-right:3px"><rect x="5" y="7" width="2" height="3" fill="#3a55c8"/><rect x="8" y="5" width="2" height="5" fill="#3a55c8"/><rect x="11" y="3" width="2" height="7" fill="#3a55c8"/><rect x="14" y="1" width="2" height="9" fill="#3a55c8"/><text x="1.5" y="16.5" font-family="Liberation Sans" font-size="7" font-weight="bold" fill="#3a55c8">GPS</text></svg><svg width="14" height="12" viewBox="0 0 14 12" style="margin-left:6px;flex:none"><path d="M4.5 0.5 L8.5 5 H0.5Z M4.5 11.5 L8.5 7 H0.5Z" fill="#8a8f99"/></svg></div></th></tr><tr style="height:35px;background:#fff"><td style="padding:1px 0 0 0;text-align:center;border-right:1px solid #e4e8f2;border-bottom:1px solid #e9ecf3;white-space:nowrap;overflow:hidden">1</td><td style="padding:1px 0 0 0;text-align:center;border-right:1px solid #e4e8f2;border-bottom:1px solid #e9ecf3;white-space:nowrap;overflow:hidden">ZainSudan</td><td style="padding:1px 0 0 0;text-align:center;border-right:1px solid #e4e8f2;border-bottom:1px solid #e9ecf3;white-space:nowrap;overflow:hidden"><span style="color:#159a2a;font-weight:bold;text-decoration:underline">8025203320</span></td><td style="padding:1px 0 0 0;text-align:center;border-right:1px solid #e4e8f2;border-bottom:1px solid #e9ecf3;white-space:nowrap;overflow:hidden"><span style="color:#159a2a;font-weight:bold;text-decoration:underline">8025203320</span></td><td style="padding:1px 0 0 0;text-align:center;border-right:1px solid #e4e8f2;border-bottom:1px solid #e9ecf3;white-space:nowrap;overflow:hidden">JT701D</td><td style="padding:1px 0 0 0;text-align:center;border-right:1px solid #e4e8f2;border-bottom:1px solid #e9ecf3;white-space:nowrap;overflow:hidden"><svg width="32" height="27" viewBox="0 0 32 27" style="vertical-align:middle;display:block;margin:auto"><g stroke="#10c84a" fill="none" stroke-linecap="round"><path d="M11.85 6.8 L21.9 17.2" stroke-width="3.4"/><path d="M14.8 13.6 L20.8 7.9" stroke-width="5.5"/><path d="M8.6 15.6 Q9 19.8 13.5 20.4" stroke-width="1.3"/><path d="M10.4 15.8 Q10.8 18.2 13.3 18.6" stroke-width="1.2"/></g><circle cx="12.6" cy="16.2" r="1" fill="#10c84a"/></svg></td><td style="padding:1px 0 0 0;text-align:center;border-right:1px solid #e4e8f2;border-bottom:1px solid #e9ecf3;white-space:nowrap;overflow:hidden">2025-11-30 08:19:36</td><td style="padding:1px 0 0 0;text-align:center;border-right:1px solid #e4e8f2;border-bottom:1px solid #e9ecf3;white-space:nowrap;overflow:hidden">2025-11-30 13:46:22</td><td style="padding:1px 0 0 0;text-align:center;border-right:1px solid #e4e8f2;border-bottom:1px solid #e9ecf3;white-space:nowrap;overflow:hidden">70</td><td style="padding:1px 0 0 0;text-align:center;border-right:1px solid #e4e8f2;border-bottom:1px solid #e9ecf3;white-space:nowrap;overflow:hidden">12653</td><td style="padding:1px 0 0 0;text-align:center;border-right:1px solid #e4e8f2;border-bottom:1px solid #e9ecf3;white-space:nowrap;overflow:hidden">89%</td><td style="padding:1px 0 0 0;text-align:center;border-right:1px solid #e4e8f2;border-bottom:1px solid #e9ecf3;white-space:nowrap;overflow:hidden">North Darfur State, Sudan</td><td style="padding:1px 0 0 0;text-align:center;border-right:1px solid #e4e8f2;border-bottom:1px solid #e9ecf3;white-space:nowrap;overflow:hidden">17.944222,27.493465</td><td style="padding:1px 0 0 0;text-align:center;border-right:1px solid #e4e8f2;border-bottom:1px solid #e9ecf3;white-space:nowrap;overflow:hidden">1</td></tr><tr style="height:35px;background:#fafafa"><td style="padding:1px 0 0 0;text-align:center;border-right:1px solid #e4e8f2;border-bottom:1px solid #e9ecf3;white-space:nowrap;overflow:hidden">2</td><td style="padding:1px 0 0 0;text-align:center;border-right:1px solid #e4e8f2;border-bottom:1px solid #e9ecf3;white-space:nowrap;overflow:hidden">ZainSudan</td><td style="padding:1px 0 0 0;text-align:center;border-right:1px solid #e4e8f2;border-bottom:1px solid #e9ecf3;white-space:nowrap;overflow:hidden"><span style="color:#159a2a;font-weight:bold;text-decoration:underline">8025203540</span></td><td style="padding:1px 0 0 0;text-align:center;border-right:1px solid #e4e8f2;border-bottom:1px solid #e9ecf3;white-space:nowrap;overflow:hidden"><span style="color:#159a2a;font-weight:bold;text-decoration:underline">8025203540</span></td><td style="padding:1px 0 0 0;text-align:center;border-right:1px solid #e4e8f2;border-bottom:1px solid #e9ecf3;white-space:nowrap;overflow:hidden">JT701D</td><td style="padding:1px 0 0 0;text-align:center;border-right:1px solid #e4e8f2;border-bottom:1px solid #e9ecf3;white-space:nowrap;overflow:hidden"><svg width="32" height="27" viewBox="0 0 32 27" style="vertical-align:middle;display:block;margin:auto"><g stroke="#10c84a" fill="none" stroke-linecap="round"><path d="M11.85 6.8 L21.9 17.2" stroke-width="3.4"/><path d="M14.8 13.6 L20.8 7.9" stroke-width="5.5"/><path d="M8.6 15.6 Q9 19.8 13.5 20.4" stroke-width="1.3"/><path d="M10.4 15.8 Q10.8 18.2 13.3 18.6" stroke-width="1.2"/></g><circle cx="12.6" cy="16.2" r="1" fill="#10c84a"/></svg></td><td style="padding:1px 0 0 0;text-align:center;border-right:1px solid #e4e8f2;border-bottom:1px solid #e9ecf3;white-space:nowrap;overflow:hidden">2025-12-01 12:08:09</td><td style="padding:1px 0 0 0;text-align:center;border-right:1px solid #e4e8f2;border-bottom:1px solid #e9ecf3;white-space:nowrap;overflow:hidden">2025-12-01 12:08:09</td><td style="padding:1px 0 0 0;text-align:center;border-right:1px solid #e4e8f2;border-bottom:1px solid #e9ecf3;white-space:nowrap;overflow:hidden">70</td><td style="padding:1px 0 0 0;text-align:center;border-right:1px solid #e4e8f2;border-bottom:1px solid #e9ecf3;white-space:nowrap;overflow:hidden">8863</td><td style="padding:1px 0 0 0;text-align:center;border-right:1px solid #e4e8f2;border-bottom:1px solid #e9ecf3;white-space:nowrap;overflow:hidden">98%</td><td style="padding:1px 0 0 0;text-align:center;border-right:1px solid #e4e8f2;border-bottom:1px solid #e9ecf3;white-space:nowrap;overflow:hidden">Primary, Port Sudan, Port ...</td><td style="padding:1px 0 0 0;text-align:center;border-right:1px solid #e4e8f2;border-bottom:1px solid #e9ecf3;white-space:nowrap;overflow:hidden">19.672665,37.090565</td><td style="padding:1px 0 0 0;text-align:center;border-right:1px solid #e4e8f2;border-bottom:1px solid #e9ecf3;white-space:nowrap;overflow:hidden">1</td></tr><tr style="height:35px;background:#fff"><td style="padding:1px 0 0 0;text-align:center;border-right:1px solid #e4e8f2;border-bottom:1px solid #e9ecf3;white-space:nowrap;overflow:hidden">3</td><td style="padding:1px 0 0 0;text-align:center;border-right:1px solid #e4e8f2;border-bottom:1px solid #e9ecf3;white-space:nowrap;overflow:hidden">ZainSudan</td><td style="padding:1px 0 0 0;text-align:center;border-right:1px solid #e4e8f2;border-bottom:1px solid #e9ecf3;white-space:nowrap;overflow:hidden"><span style="color:#159a2a;font-weight:bold;text-decoration:underline">8025202844</span></td><td style="padding:1px 0 0 0;text-align:center;border-right:1px solid #e4e8f2;border-bottom:1px solid #e9ecf3;white-space:nowrap;overflow:hidden"><span style="color:#159a2a;font-weight:bold;text-decoration:underline">8025202844</span></td><td style="padding:1px 0 0 0;text-align:center;border-right:1px solid #e4e8f2;border-bottom:1px solid #e9ecf3;white-space:nowrap;overflow:hidden">JT701D</td><td style="padding:1px 0 0 0;text-align:center;border-right:1px solid #e4e8f2;border-bottom:1px solid #e9ecf3;white-space:nowrap;overflow:hidden"><svg width="32" height="27" viewBox="0 0 32 27" style="vertical-align:middle;display:block;margin:auto"><g stroke="#10c84a" fill="none" stroke-linecap="round"><path d="M11.85 6.8 L21.9 17.2" stroke-width="3.4"/><path d="M14.8 13.6 L20.8 7.9" stroke-width="5.5"/><path d="M8.6 15.6 Q9 19.8 13.5 20.4" stroke-width="1.3"/><path d="M10.4 15.8 Q10.8 18.2 13.3 18.6" stroke-width="1.2"/></g><circle cx="12.6" cy="16.2" r="1" fill="#10c84a"/></svg></td><td style="padding:1px 0 0 0;text-align:center;border-right:1px solid #e4e8f2;border-bottom:1px solid #e9ecf3;white-space:nowrap;overflow:hidden">2025-12-01 12:23:36</td><td style="padding:1px 0 0 0;text-align:center;border-right:1px solid #e4e8f2;border-bottom:1px solid #e9ecf3;white-space:nowrap;overflow:hidden">2025-12-01 12:23:36</td><td style="padding:1px 0 0 0;text-align:center;border-right:1px solid #e4e8f2;border-bottom:1px solid #e9ecf3;white-space:nowrap;overflow:hidden">70</td><td style="padding:1px 0 0 0;text-align:center;border-right:1px solid #e4e8f2;border-bottom:1px solid #e9ecf3;white-space:nowrap;overflow:hidden">14019</td><td style="padding:1px 0 0 0;text-align:center;border-right:1px solid #e4e8f2;border-bottom:1px solid #e9ecf3;white-space:nowrap;overflow:hidden">95%</td><td style="padding:1px 0 0 0;text-align:center;border-right:1px solid #e4e8f2;border-bottom:1px solid #e9ecf3;white-space:nowrap;overflow:hidden">Port Sudan, Port Sudan Di...</td><td style="padding:1px 0 0 0;text-align:center;border-right:1px solid #e4e8f2;border-bottom:1px solid #e9ecf3;white-space:nowrap;overflow:hidden">19.75631,36.937595</td><td style="padding:1px 0 0 0;text-align:center;border-right:1px solid #e4e8f2;border-bottom:1px solid #e9ecf3;white-space:nowrap;overflow:hidden">1</td></tr><tr style="height:35px;background:#fafafa"><td style="padding:1px 0 0 0;text-align:center;border-right:1px solid #e4e8f2;border-bottom:1px solid #e9ecf3;white-space:nowrap;overflow:hidden">4</td><td style="padding:1px 0 0 0;text-align:center;border-right:1px solid #e4e8f2;border-bottom:1px solid #e9ecf3;white-space:nowrap;overflow:hidden">ZainSudan</td><td style="padding:1px 0 0 0;text-align:center;border-right:1px solid #e4e8f2;border-bottom:1px solid #e9ecf3;white-space:nowrap;overflow:hidden"><span style="color:#159a2a;font-weight:bold;text-decoration:underline">29975</span></td><td style="padding:1px 0 0 0;text-align:center;border-right:1px solid #e4e8f2;border-bottom:1px solid #e9ecf3;white-space:nowrap;overflow:hidden"><span style="color:#159a2a;font-weight:bold;text-decoration:underline">8025203247</span></td><td style="padding:1px 0 0 0;text-align:center;border-right:1px solid #e4e8f2;border-bottom:1px solid #e9ecf3;white-space:nowrap;overflow:hidden">JT701D</td><td style="padding:1px 0 0 0;text-align:center;border-right:1px solid #e4e8f2;border-bottom:1px solid #e9ecf3;white-space:nowrap;overflow:hidden"><svg width="32" height="27" viewBox="0 0 32 27" style="vertical-align:middle;display:block;margin:auto"><g stroke="#10c84a" fill="none" stroke-linecap="round"><path d="M11.85 6.8 L21.9 17.2" stroke-width="3.4"/><path d="M14.8 13.6 L20.8 7.9" stroke-width="5.5"/><path d="M8.6 15.6 Q9 19.8 13.5 20.4" stroke-width="1.3"/><path d="M10.4 15.8 Q10.8 18.2 13.3 18.6" stroke-width="1.2"/></g><circle cx="12.6" cy="16.2" r="1" fill="#10c84a"/></svg></td><td style="padding:1px 0 0 0;text-align:center;border-right:1px solid #e4e8f2;border-bottom:1px solid #e9ecf3;white-space:nowrap;overflow:hidden">2025-12-01 12:23:18</td><td style="padding:1px 0 0 0;text-align:center;border-right:1px solid #e4e8f2;border-bottom:1px solid #e9ecf3;white-space:nowrap;overflow:hidden">2025-12-01 12:23:20</td><td style="padding:1px 0 0 0;text-align:center;border-right:1px solid #e4e8f2;border-bottom:1px solid #e9ecf3;white-space:nowrap;overflow:hidden">70</td><td style="padding:1px 0 0 0;text-align:center;border-right:1px solid #e4e8f2;border-bottom:1px solid #e9ecf3;white-space:nowrap;overflow:hidden">849</td><td style="padding:1px 0 0 0;text-align:center;border-right:1px solid #e4e8f2;border-bottom:1px solid #e9ecf3;white-space:nowrap;overflow:hidden">81%</td><td style="padding:1px 0 0 0;text-align:center;border-right:1px solid #e4e8f2;border-bottom:1px solid #e9ecf3;white-space:nowrap;overflow:hidden">Port Sudan, Port Sudan Di...</td><td style="padding:1px 0 0 0;text-align:center;border-right:1px solid #e4e8f2;border-bottom:1px solid #e9ecf3;white-space:nowrap;overflow:hidden">19.755022,36.94031</td><td style="padding:1px 0 0 0;text-align:center;border-right:1px solid #e4e8f2;border-bottom:1px solid #e9ecf3;white-space:nowrap;overflow:hidden">1</td></tr><tr style="height:35px;background:#fff"><td style="padding:1px 0 0 0;text-align:center;border-right:1px solid #e4e8f2;border-bottom:1px solid #e9ecf3;white-space:nowrap;overflow:hidden">5</td><td style="padding:1px 0 0 0;text-align:center;border-right:1px solid #e4e8f2;border-bottom:1px solid #e9ecf3;white-space:nowrap;overflow:hidden">ZainSudan</td><td style="padding:1px 0 0 0;text-align:center;border-right:1px solid #e4e8f2;border-bottom:1px solid #e9ecf3;white-space:nowrap;overflow:hidden"><span style="color:#159a2a;font-weight:bold;text-decoration:underline">13723</span></td><td style="padding:1px 0 0 0;text-align:center;border-right:1px solid #e4e8f2;border-bottom:1px solid #e9ecf3;white-space:nowrap;overflow:hidden"><span style="color:#159a2a;font-weight:bold;text-decoration:underline">8025202803</span></td><td style="padding:1px 0 0 0;text-align:center;border-right:1px solid #e4e8f2;border-bottom:1px solid #e9ecf3;white-space:nowrap;overflow:hidden">JT701D</td><td style="padding:1px 0 0 0;text-align:center;border-right:1px solid #e4e8f2;border-bottom:1px solid #e9ecf3;white-space:nowrap;overflow:hidden"><svg width="32" height="27" viewBox="0 0 32 27" style="vertical-align:middle;display:block;margin:auto"><g stroke="#10c84a" fill="none" stroke-linecap="round"><path d="M11.85 6.8 L21.9 17.2" stroke-width="3.4"/><path d="M14.8 13.6 L20.8 7.9" stroke-width="5.5"/><path d="M8.6 15.6 Q9 19.8 13.5 20.4" stroke-width="1.3"/><path d="M10.4 15.8 Q10.8 18.2 13.3 18.6" stroke-width="1.2"/></g><circle cx="12.6" cy="16.2" r="1" fill="#10c84a"/></svg></td><td style="padding:1px 0 0 0;text-align:center;border-right:1px solid #e4e8f2;border-bottom:1px solid #e9ecf3;white-space:nowrap;overflow:hidden">2025-12-01 10:56:12</td><td style="padding:1px 0 0 0;text-align:center;border-right:1px solid #e4e8f2;border-bottom:1px solid #e9ecf3;white-space:nowrap;overflow:hidden">2025-12-01 10:56:15</td><td style="padding:1px 0 0 0;text-align:center;border-right:1px solid #e4e8f2;border-bottom:1px solid #e9ecf3;white-space:nowrap;overflow:hidden">51</td><td style="padding:1px 0 0 0;text-align:center;border-right:1px solid #e4e8f2;border-bottom:1px solid #e9ecf3;white-space:nowrap;overflow:hidden">12382</td><td style="padding:1px 0 0 0;text-align:center;border-right:1px solid #e4e8f2;border-bottom:1px solid #e9ecf3;white-space:nowrap;overflow:hidden">84%</td><td style="padding:1px 0 0 0;text-align:center;border-right:1px solid #e4e8f2;border-bottom:1px solid #e9ecf3;white-space:nowrap;overflow:hidden">Kassala-Port Sudan Highw...</td><td style="padding:1px 0 0 0;text-align:center;border-right:1px solid #e4e8f2;border-bottom:1px solid #e9ecf3;white-space:nowrap;overflow:hidden">17.315707,36.062968</td><td style="padding:1px 0 0 0;text-align:center;border-right:1px solid #e4e8f2;border-bottom:1px solid #e9ecf3;white-space:nowrap;overflow:hidden">1</td></tr></table></div><div class="abs" style="left:198px;top:897px;width:1722px;height:14px;background:#e8ecfa"></div><div class="abs" style="left:199px;top:897px;width:1374px;height:13px;background:#93a6ef"></div><div class="abs" style="left:1906px;top:697px;width:14px;height:34px;background:#c5ddf8"></div><div class="abs" style="left:1906px;top:731px;width:14px;height:166px;background:#e9edfa"></div><div class="abs" style="left:1906px;top:732px;width:12px;height:78px;background:#93a6ef"></div><svg class="abs" style="left:1866px;top:757px" width="48" height="48" viewBox="0 0 48 48">
<defs><radialGradient id="fg" cx="0.35" cy="0.3" r="0.8"><stop offset="0" stop-color="#7aa0ff"/><stop offset="0.55" stop-color="#3d55e0"/><stop offset="1" stop-color="#3a1fc0"/></radialGradient></defs>
<circle cx="24" cy="24" r="22.5" fill="url(#fg)" stroke="#c8ccd8" stroke-width="2"/>
<g transform="translate(19 19)"><circle r="7.5" fill="none" stroke="#fff" stroke-width="3.5" stroke-dasharray="3.2 2.2"/><circle r="5" fill="#fff"/><circle r="2.6" fill="#3d55e0"/><circle r="1.2" fill="#fff"/></g>
<g transform="translate(30 31)"><circle r="4.2" fill="none" stroke="#fff" stroke-width="2.5" stroke-dasharray="2 1.5"/><circle r="2.6" fill="none" stroke="#fff" stroke-width="1.4"/></g>
</svg>
<!--BOTTOM-->
</body></html>
